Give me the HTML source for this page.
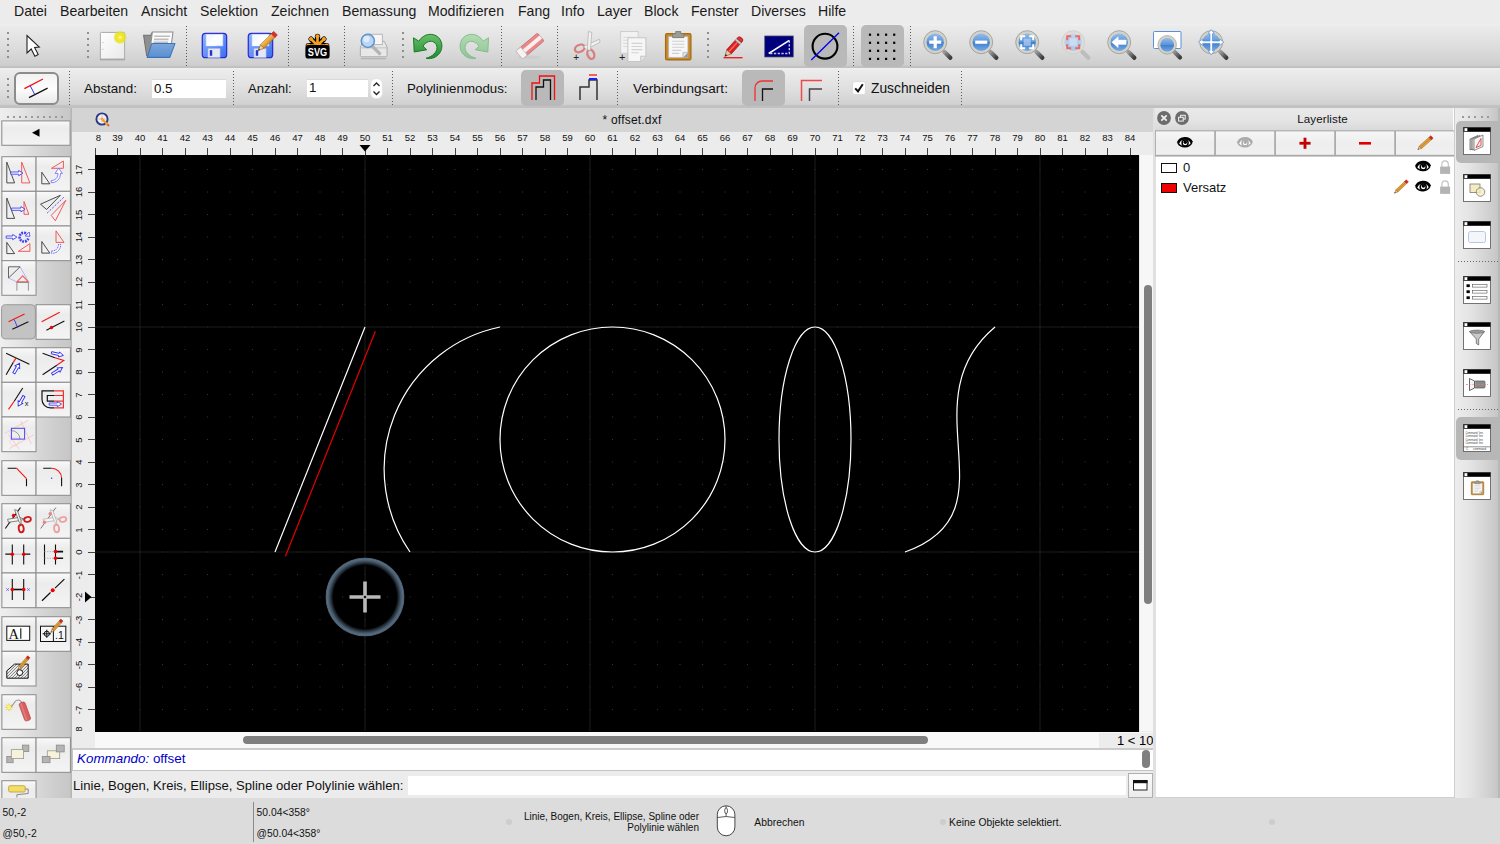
<!DOCTYPE html><html lang="de"><head><meta charset="utf-8"><title>offset.dxf</title><style>
*{box-sizing:border-box;margin:0;padding:0}
html,body{width:1500px;height:844px;overflow:hidden;background:#ececec;font-family:"Liberation Sans",sans-serif;color:#000}
.a{position:absolute}
#menubar{left:0;top:0;width:1500px;height:24px;background:#ececec}
#menubar span{position:absolute;top:3px;font-size:14.1px;line-height:17px;color:#1a1a1a;white-space:nowrap}
#tb1{left:0;top:24px;width:1500px;height:44px;background:linear-gradient(#f0f0f0 0%,#ebebeb 4%,#dedede 50%,#cecece 94%,#bababa 98%,#c8c8c8 100%)}
#tb2{left:0;top:68px;width:1500px;height:40px;background:linear-gradient(#f0f0f0 0%,#ececec 5%,#e0e0e0 50%,#d1d1d1 91%,#c2c2c2 94%,#c0c0c0 100%)}
.lbl{position:absolute;font-size:13px;line-height:16px;white-space:nowrap;color:#111}
.vsep{position:absolute;width:0;border-left:1px dotted #6e6e6e}
.hdl{position:absolute;width:2px;border-left:2px dotted #9a9a9a}
#left{left:0;top:108px;width:72px;height:690px;background:linear-gradient(90deg,#efefef 0%,#e6e6e6 25%,#d9d9d9 50%,#cecece 75%,#c7c7c7 97%,#b6b6b6 98.5%,#b6b6b6 100%)}
.lb{position:absolute;width:34.5px;height:34.8px;border:1px solid #a9a9a9;background:linear-gradient(#fbfbfb,#ededed 60%,#e2e2e2)}
.lb.on{background:#c9c9c9;border-color:#999;border-radius:4px}
.lb svg{position:absolute;left:0;top:0}
#status{left:0;top:798px;width:1500px;height:46px;background:#dcdcdc}
.st{position:absolute;font-size:10.3px;line-height:13px;color:#111;white-space:nowrap;letter-spacing:0.04px}
#tabbar{left:72px;top:108px;width:1083px;height:24px;background:#d4d4d4}
#hr{left:72px;top:132px;width:1083px;height:23px;background:#ececec}
#vr{left:72px;top:155px;width:23px;height:576px;background:#ececec;overflow:hidden}
.rl{position:absolute;font-size:9.5px;line-height:10px;color:#111;white-space:nowrap}
#cv{left:95px;top:155px;width:1044px;height:576.700px;background:#000;overflow:hidden}
#vsb{left:1139px;top:155px;width:16px;height:576px;background:#f7f7f7;border-left:1px solid #e4e4e4}
#hsb{left:95px;top:731.700px;width:1060px;height:16.300px;background:#f8f8f8}
#cmdhist{left:72px;top:748px;width:1083px;height:23px;background:#fff;border-top:2px solid #cbcbcb;border-bottom:1px solid #c4c4c4;border-left:1px solid #c4c4c4}
#cmdline{left:72px;top:771px;width:1083px;height:27px;background:#ececec}
#rp{left:1155px;top:108px;width:300px;height:690px;background:#fff}
#rdock{left:1455px;top:108px;width:45px;height:690.500px;background:linear-gradient(90deg,#ededed 0%,#e5e5e5 30%,#d3d3d3 70%,#c6c6c6 95%,#b8b8b8 96.5%,#b8b8b8 100%)}
.lyb{position:absolute;top:131px;height:24px;width:58.6px;border:1px solid #b4b4b4;background:linear-gradient(#fafafa,#ececec)}
.di{position:absolute;left:1465px;width:27px;height:27px}
</style></head><body>
<svg width="0" height="0" style="position:absolute"><defs>
<linearGradient id="gBlue" x1="0" y1="0" x2="0" y2="1"><stop offset="0" stop-color="#9cc2ee"/><stop offset="0.5" stop-color="#5b94d8"/><stop offset="0.52" stop-color="#3f7fce"/><stop offset="1" stop-color="#7fb0e8"/></linearGradient>
<linearGradient id="gBlueF" x1="0" y1="0" x2="0" y2="1"><stop offset="0" stop-color="#c4d8f0"/><stop offset="1" stop-color="#a9c6ea"/></linearGradient>
<linearGradient id="gHandle" x1="0" y1="0" x2="1" y2="1"><stop offset="0" stop-color="#9a9a9a"/><stop offset="1" stop-color="#3c3c3c"/></linearGradient>
<linearGradient id="gPaper" x1="0" y1="0" x2="1" y2="1"><stop offset="0" stop-color="#ffffff"/><stop offset="1" stop-color="#e9e9e9"/></linearGradient>
<radialGradient id="gGlow"><stop offset="0" stop-color="#ffffe0"/><stop offset="0.3" stop-color="#f4ea20"/><stop offset="0.7" stop-color="#e8e020" stop-opacity="0.9"/><stop offset="1" stop-color="#e8e020" stop-opacity="0"/></radialGradient>
<linearGradient id="gFolder" x1="0" y1="0" x2="0" y2="1"><stop offset="0" stop-color="#7aa8dc"/><stop offset="1" stop-color="#5a8fd0"/></linearGradient>
<linearGradient id="gFloppy" x1="0" y1="0" x2="1" y2="1"><stop offset="0" stop-color="#8fb6ff"/><stop offset="1" stop-color="#3a6ef0"/></linearGradient>
<linearGradient id="gGreen" x1="0" y1="0" x2="0" y2="1"><stop offset="0" stop-color="#6cc06c"/><stop offset="1" stop-color="#1e8a2e"/></linearGradient>
<linearGradient id="gGreenF" x1="0" y1="0" x2="0" y2="1"><stop offset="0" stop-color="#b4dcb4"/><stop offset="1" stop-color="#8cc494"/></linearGradient>
<linearGradient id="gPencil" x1="0" y1="0" x2="1" y2="0"><stop offset="0" stop-color="#f5c46a"/><stop offset="1" stop-color="#d98a1c"/></linearGradient>
<linearGradient id="gBtn" x1="0" y1="0" x2="0" y2="1"><stop offset="0" stop-color="#ffffff"/><stop offset="1" stop-color="#e9e9e9"/></linearGradient>
</defs></svg>

<div id="menubar" class="a">
<span style="left:14px">Datei</span>
<span style="left:60px">Bearbeiten</span>
<span style="left:141px">Ansicht</span>
<span style="left:200px">Selektion</span>
<span style="left:271px">Zeichnen</span>
<span style="left:342px">Bemassung</span>
<span style="left:428px">Modifizieren</span>
<span style="left:518px">Fang</span>
<span style="left:561px">Info</span>
<span style="left:597px">Layer</span>
<span style="left:644px">Block</span>
<span style="left:691px">Fenster</span>
<span style="left:751px">Diverses</span>
<span style="left:818px">Hilfe</span>
</div>
<div id="tb1" class="a">
<i class="a" style="left:7px;top:8px;width:2px;height:2px;background:#8e8e8e"></i><i class="a" style="left:7px;top:14px;width:2px;height:2px;background:#8e8e8e"></i><i class="a" style="left:7px;top:20px;width:2px;height:2px;background:#8e8e8e"></i><i class="a" style="left:7px;top:26px;width:2px;height:2px;background:#8e8e8e"></i><i class="a" style="left:7px;top:32px;width:2px;height:2px;background:#8e8e8e"></i><i class="a" style="left:87px;top:8px;width:2px;height:2px;background:#8e8e8e"></i><i class="a" style="left:87px;top:14px;width:2px;height:2px;background:#8e8e8e"></i><i class="a" style="left:87px;top:20px;width:2px;height:2px;background:#8e8e8e"></i><i class="a" style="left:87px;top:26px;width:2px;height:2px;background:#8e8e8e"></i><i class="a" style="left:87px;top:32px;width:2px;height:2px;background:#8e8e8e"></i><i class="a" style="left:402px;top:8px;width:2px;height:2px;background:#8e8e8e"></i><i class="a" style="left:402px;top:14px;width:2px;height:2px;background:#8e8e8e"></i><i class="a" style="left:402px;top:20px;width:2px;height:2px;background:#8e8e8e"></i><i class="a" style="left:402px;top:26px;width:2px;height:2px;background:#8e8e8e"></i><i class="a" style="left:402px;top:32px;width:2px;height:2px;background:#8e8e8e"></i><i class="a" style="left:707px;top:8px;width:2px;height:2px;background:#8e8e8e"></i><i class="a" style="left:707px;top:14px;width:2px;height:2px;background:#8e8e8e"></i><i class="a" style="left:707px;top:20px;width:2px;height:2px;background:#8e8e8e"></i><i class="a" style="left:707px;top:26px;width:2px;height:2px;background:#8e8e8e"></i><i class="a" style="left:707px;top:32px;width:2px;height:2px;background:#8e8e8e"></i><i class="a" style="left:186.0px;top:2.0px;height:40.0px;width:1px;background:repeating-linear-gradient(#5a5a5a 0 1px,transparent 1px 3px)"></i><i class="a" style="left:288.0px;top:2.0px;height:40.0px;width:1px;background:repeating-linear-gradient(#5a5a5a 0 1px,transparent 1px 3px)"></i><i class="a" style="left:344.0px;top:2.0px;height:40.0px;width:1px;background:repeating-linear-gradient(#5a5a5a 0 1px,transparent 1px 3px)"></i><i class="a" style="left:501.0px;top:2.0px;height:40.0px;width:1px;background:repeating-linear-gradient(#5a5a5a 0 1px,transparent 1px 3px)"></i><i class="a" style="left:557.0px;top:2.0px;height:40.0px;width:1px;background:repeating-linear-gradient(#5a5a5a 0 1px,transparent 1px 3px)"></i><i class="a" style="left:853.0px;top:2.0px;height:40.0px;width:1px;background:repeating-linear-gradient(#5a5a5a 0 1px,transparent 1px 3px)"></i><i class="a" style="left:910.0px;top:2.0px;height:40.0px;width:1px;background:repeating-linear-gradient(#5a5a5a 0 1px,transparent 1px 3px)"></i><i class="a" style="left:804px;top:1px;width:43px;height:42px;border-radius:5px;background:#b9b9b9"></i><i class="a" style="left:861px;top:1px;width:43px;height:42px;border-radius:5px;background:#b9b9b9"></i><svg class="a" style="left:97.0px;top:6.0px;overflow:visible" width="31" height="31" viewBox="0 0 32 32"><path d="M3 30.5 h26" stroke="#9a9a9a" stroke-width="1.6" opacity=".8"/><rect x="3.5" y="2.5" width="25" height="27.5" rx="1" fill="url(#gPaper)" stroke="#a8a8a8" stroke-width="1"/><path d="M5.5 13 h1.2 M5.5 20 h1.2" stroke="#bbb" stroke-width="1"/><circle cx="23.8" cy="7.6" r="7.2" fill="url(#gGlow)"/></svg><svg class="a" style="left:140.5px;top:5.0px;overflow:visible" width="33" height="33" viewBox="0 0 32 32"><path d="M2.5 6 h7 l1 -2 h4 v22 h-9 z" fill="#8f8f8f" stroke="#707070" stroke-width="1"/><path d="M8 26 L11 3 L31 3 L28 26Z" fill="#fafafa" stroke="#8e8e8e" stroke-width="1"/><path d="M13 7 h15 M12.6 10 h14 M12.2 13 h14" stroke="#bdbdbd" stroke-width="1.6"/><path d="M6 27.5 L10.5 14 L33 14 L28 27.5Z" fill="url(#gFolder)" stroke="#3f73b8" stroke-width="1" stroke-linejoin="round"/></svg><svg class="a" style="left:198.9px;top:5.7px;overflow:visible" width="30" height="30" viewBox="0 0 32 32"><rect x="3.5" y="3.5" width="26" height="26" rx="3.5" fill="url(#gFloppy)" stroke="#2a2ad0" stroke-width="1.3"/><rect x="7.5" y="4.5" width="18" height="12.5" fill="#f4f8ff" stroke="#c4d4f4" stroke-width=".6"/><path d="M8 15 L18 5 h7 v5 l-7 7 h-10z" fill="#fff" opacity=".7"/><rect x="9.5" y="19.5" width="13" height="10" fill="#e4e8f4" stroke="#9aa8d8" stroke-width=".6"/><rect x="11.5" y="21.5" width="2.6" height="6" fill="#2233cc"/></svg><svg class="a" style="left:244.9px;top:5.7px;overflow:visible" width="30" height="30" viewBox="0 0 32 32"><rect x="3.5" y="3.5" width="26" height="26" rx="3.5" fill="url(#gFloppy)" stroke="#2a2ad0" stroke-width="1.3"/><rect x="7.5" y="4.5" width="18" height="12.5" fill="#f4f8ff" stroke="#c4d4f4" stroke-width=".6"/><path d="M8 15 L18 5 h7 v5 l-7 7 h-10z" fill="#fff" opacity=".7"/><rect x="9.5" y="19.5" width="13" height="10" fill="#e4e8f4" stroke="#9aa8d8" stroke-width=".6"/><rect x="11.5" y="21.5" width="2.6" height="6" fill="#2233cc"/><g transform="translate(14 22) scale(1.05) rotate(45)"><path d="M0 0 L-2.6 -6 L2.6 -6Z" fill="#f0d0a0" stroke="#8a5a1a" stroke-width=".6"/><path d="M0 0 L-0.9 -2 L0.9 -2Z" fill="#333"/><rect x="-2.6" y="-22" width="5.2" height="16" fill="url(#gPencil)" stroke="#a8660f" stroke-width=".6"/><rect x="-2.6" y="-25" width="5.2" height="3.4" fill="#e03030" stroke="#a01818" stroke-width=".6"/></g></svg><svg class="a" style="left:301.5px;top:6.6px;overflow:visible" width="31" height="31" viewBox="0 0 32 32"><g fill="#f4a020" stroke="#000" stroke-width="1.6"><path d="M16 15 L6.5 15.0" stroke="#000" stroke-width="5.4" stroke-linecap="round"/><path d="M16 15 L9.3 8.3" stroke="#000" stroke-width="5.4" stroke-linecap="round"/><path d="M16 15 L16.0 5.5" stroke="#000" stroke-width="5.4" stroke-linecap="round"/><path d="M16 15 L22.7 8.3" stroke="#000" stroke-width="5.4" stroke-linecap="round"/><path d="M16 15 L25.5 15.0" stroke="#000" stroke-width="5.4" stroke-linecap="round"/></g><g><path d="M16 15 L6.5 15.0" stroke="#f4a020" stroke-width="2.8" stroke-linecap="round"/><circle cx="6.5" cy="15.0" r="2.1" fill="#f4a020"/><path d="M16 15 L9.3 8.3" stroke="#f4a020" stroke-width="2.8" stroke-linecap="round"/><circle cx="9.3" cy="8.3" r="2.1" fill="#f4a020"/><path d="M16 15 L16.0 5.5" stroke="#f4a020" stroke-width="2.8" stroke-linecap="round"/><circle cx="16.0" cy="5.5" r="2.1" fill="#f4a020"/><path d="M16 15 L22.7 8.3" stroke="#f4a020" stroke-width="2.8" stroke-linecap="round"/><circle cx="22.7" cy="8.3" r="2.1" fill="#f4a020"/><path d="M16 15 L25.5 15.0" stroke="#f4a020" stroke-width="2.8" stroke-linecap="round"/><circle cx="25.5" cy="15.0" r="2.1" fill="#f4a020"/></g><rect x="3.5" y="14.5" width="25" height="14" rx="3" fill="#000"/><text x="16" y="26.3" text-anchor="middle" font-family="Liberation Sans, sans-serif" font-weight="bold" font-size="11.5" textLength="20" lengthAdjust="spacingAndGlyphs" fill="#fff">SVG</text></svg><svg class="a" style="left:358.0px;top:6.5px;overflow:visible" width="30" height="30" viewBox="0 0 32 32"><path d="M2.5 17 L6 11 h22 l3 6 v9 a1.5 1.5 0 0 1 -1.5 1.5 h-25.5 a1.5 1.5 0 0 1 -1.5 -1.5z" fill="#e8e8e8" stroke="#a9a9a9" stroke-width="1"/><rect x="11" y="3.5" width="15" height="11" fill="#f6f6f6" stroke="#b4b4b4" stroke-width="1"/><path d="M2.5 18 h28.5" stroke="#bdbdbd" stroke-width="1"/><path d="M3 29.5 h27" stroke="#aaa" stroke-width="1.4" opacity=".7"/><path d="M15 16 L23 24" stroke="#b4b4b4" stroke-width="3.4" stroke-linecap="round"/><circle cx="10.5" cy="10.5" r="7" fill="#bcd6f2" stroke="#5c92d0" stroke-width="1.6"/><circle cx="9" cy="8.6" r="3.4" fill="#e6f0fb" opacity=".8"/></svg><svg class="a" style="left:412.0px;top:5.5px;overflow:visible" width="32" height="32" viewBox="0 0 32 32"><path d="M1.5 7.8 L2.2 22 L14.7 19.8 L11 16.2 C14 11.5 19 10.2 22 12.2 C26 14.8 26 20 22 24 C20 26 17 27.5 14 28.3 C18 29.2 23 28.2 26.5 24.5 C31 20 31 12 26.5 7.5 C21 2.5 12 3.2 6.8 11.2 Z" fill="url(#gGreen)" stroke="#1a7a28" stroke-width="1" stroke-linejoin="round"/></svg><svg class="a" style="left:458.0px;top:5.5px;overflow:visible" width="32" height="32" viewBox="0 0 32 32"><g transform="translate(32 0) scale(-1 1)"><path d="M1.5 7.8 L2.2 22 L14.7 19.8 L11 16.2 C14 11.5 19 10.2 22 12.2 C26 14.8 26 20 22 24 C20 26 17 27.5 14 28.3 C18 29.2 23 28.2 26.5 24.5 C31 20 31 12 26.5 7.5 C21 2.5 12 3.2 6.8 11.2 Z" fill="url(#gGreenF)" stroke="#86bc8e" stroke-width="1" stroke-linejoin="round"/></g></svg><svg class="a" style="left:515.0px;top:6.5px;overflow:visible" width="30" height="30" viewBox="0 0 32 32"><ellipse cx="15" cy="28" rx="12" ry="1.8" fill="#c9c9c9" opacity=".7"/><g transform="rotate(-40 16 16)"><rect x="1" y="10.5" width="30" height="11" rx="1.5" fill="#e88888" stroke="#c06a6a" stroke-width=".8"/><rect x="1" y="14" width="30" height="4.2" fill="#fbeeee"/><rect x="1" y="10.5" width="6.5" height="11" rx="1.2" fill="#f4f4f4" stroke="#c4c4c4" stroke-width=".8"/></g></svg><svg class="a" style="left:570.0px;top:6.0px;overflow:visible" width="31" height="31" viewBox="0 0 32 32"><g fill="none" stroke="#d88080" stroke-width="2.4"><ellipse cx="10" cy="19" rx="5.2" ry="3.6" transform="rotate(-25 10 19)"/><ellipse cx="21.5" cy="25" rx="3.4" ry="5" transform="rotate(-20 21.5 25)"/></g><path d="M14 17 L30.5 9.5 L31 12.5 L17 20Z" fill="#f1f1f1" stroke="#b4b4b4" stroke-width=".8"/><path d="M18 20.5 L19 1.5 L22.5 2.5 L21 21Z" fill="#f1f1f1" stroke="#b4b4b4" stroke-width=".8"/><text x="3.300" y="31.800" font-family="Liberation Sans, sans-serif" font-size="10.500" fill="#222">+</text></svg><svg class="a" style="left:615.5px;top:5.0px;overflow:visible" width="33" height="33" viewBox="0 0 32 32"><path d="M4.500 2.500 h17 v21 h-17z" fill="#f2f2f2" stroke="#cfcfcf" stroke-width="1"/><path d="M7 8 h11 M7 11 h11 M7 14 h11 M7 17 h11" stroke="#dadada" stroke-width="1"/><path d="M11.500 8.500 h17.5 v18 l-5 5 h-12.500z" fill="#f6f6f6" stroke="#c6c6c6" stroke-width="1"/><path d="M29 26.500 h-5 v5" fill="#e4e4e4" stroke="#c6c6c6" stroke-width="1"/><path d="M15 14 h10.500 M15 17 h10.500 M15 20 h10.500 M15 23 h7" stroke="#d2d2d2" stroke-width="1.1"/><text x="2.800" y="31.300" font-family="Liberation Sans, sans-serif" font-size="10.500" fill="#222">+</text></svg><svg class="a" style="left:661.8px;top:5.2px;overflow:visible" width="32.5" height="32.5" viewBox="0 0 32 32"><rect x="3.500" y="4.500" width="25" height="26" rx="1.5" fill="#c88a2c" stroke="#a06a18" stroke-width="1.2"/><path d="M6.500 7.500 h19 v20.500 h-19z" fill="#f7f7f7" stroke="#b9b9b9" stroke-width=".7"/><path d="M20.500 28 L25.500 23 v5z" fill="#9a9a9a"/><path d="M20.500 28 v-5 h5" fill="#e2e2e2" stroke="#aaa" stroke-width=".6"/><path d="M10 12 h12 M10 15 h12 M10 18 h12 M10 21 h9 M10 24 h7" stroke="#cfcfcf" stroke-width="1.1"/><path d="M10.500 8.500 v-3 a1 1 0 0 1 1 -1 h2 v-2 h5 v2 h2 a1 1 0 0 1 1 1 v3z" fill="#9c9c92" stroke="#77776e" stroke-width=".8"/></svg><svg class="a" style="left:718.5px;top:7.0px;overflow:visible" width="29" height="29" viewBox="0 0 32 32"><path d="M5 29.500 h21" stroke="#f00000" stroke-width="1.300"/><g transform="translate(6.500 28) rotate(42)"><path d="M0 0 L-3.400 -7 L3.400 -7Z" fill="#eac9a0" stroke="#7a4a10" stroke-width=".6"/><path d="M0 0 L-1.200 -2.500 L1.200 -2.500Z" fill="#222"/><rect x="-3.400" y="-21" width="6.800" height="14" fill="#e02020" stroke="#8c1010" stroke-width=".7"/><rect x="-1" y="-21" width="1.600" height="14" fill="#f46a6a"/><rect x="-3.400" y="-23.500" width="6.800" height="2.600" fill="#cfcfcf" stroke="#888" stroke-width=".6"/><path d="M-3.400 -23.500 v-1.500 a3.400 2.500 0 0 1 6.800 0 v1.500z" fill="#e03030" stroke="#8c1010" stroke-width=".7"/></g></svg><svg class="a" style="left:764.0px;top:6.5px;overflow:visible" width="30" height="30" viewBox="0 0 32 32"><rect x="1" y="5.500" width="30" height="22" fill="#00007e" stroke="#1a1a5a" stroke-width="1"/><path d="M5 24 L27 10" stroke="#fff" stroke-width="1.600"/><path d="M27 10 V24 H5" stroke="#c8c8e8" stroke-width="1.500" stroke-dasharray="2.400 1.600" fill="none"/></svg><svg class="a" style="left:809.0px;top:5.5px;overflow:visible" width="32" height="32" viewBox="0 0 32 32"><circle cx="16" cy="16.200" r="12.400" fill="none" stroke="#000" stroke-width="2.100"/><path d="M2.300 30 L30 2.800" stroke="#0000f0" stroke-width="1.300"/></svg><svg class="a" style="left:866.0px;top:5.5px;overflow:visible" width="32" height="32" viewBox="0 0 32 32"><rect x="2.9" y="3.6" width="2.200" height="2.200" fill="#000"/><rect x="2.9" y="11.7" width="2.200" height="2.200" fill="#000"/><rect x="2.9" y="19.7" width="2.200" height="2.200" fill="#000"/><rect x="2.9" y="27.8" width="2.200" height="2.200" fill="#000"/><rect x="11.0" y="3.6" width="2.200" height="2.200" fill="#000"/><rect x="11.0" y="11.7" width="2.200" height="2.200" fill="#000"/><rect x="11.0" y="19.7" width="2.200" height="2.200" fill="#000"/><rect x="11.0" y="27.8" width="2.200" height="2.200" fill="#000"/><rect x="19.0" y="3.6" width="2.200" height="2.200" fill="#000"/><rect x="19.0" y="11.7" width="2.200" height="2.200" fill="#000"/><rect x="19.0" y="19.7" width="2.200" height="2.200" fill="#000"/><rect x="19.0" y="27.8" width="2.200" height="2.200" fill="#000"/><rect x="27.1" y="3.6" width="2.200" height="2.200" fill="#000"/><rect x="27.1" y="11.7" width="2.200" height="2.200" fill="#000"/><rect x="27.1" y="19.7" width="2.200" height="2.200" fill="#000"/><rect x="27.1" y="27.8" width="2.200" height="2.200" fill="#000"/></svg><svg class="a" style="left:922.0px;top:5.5px;overflow:visible" width="32" height="32" viewBox="0 0 32 32"><path d="M22.5 22 L28.3 27.8" stroke="url(#gHandle)" stroke-width="4.4" stroke-linecap="round"/><g transform="translate(0.2 -0.8)"><circle cx="13" cy="13" r="10" fill="url(#gBlue)" stroke="#d2d2c8" stroke-width="2.6"/><circle cx="13" cy="13" r="11.5" fill="none" stroke="#8c8c84" stroke-width="0.7"/><path d="M7 13 h12 M13 7 v12" stroke="#fff" stroke-width="3.200"/></g></svg><svg class="a" style="left:968.0px;top:5.5px;overflow:visible" width="32" height="32" viewBox="0 0 32 32"><path d="M22.5 22 L28.3 27.8" stroke="url(#gHandle)" stroke-width="4.4" stroke-linecap="round"/><g transform="translate(0.2 -0.8)"><circle cx="13" cy="13" r="10" fill="url(#gBlue)" stroke="#d2d2c8" stroke-width="2.6"/><circle cx="13" cy="13" r="11.5" fill="none" stroke="#8c8c84" stroke-width="0.7"/><path d="M7 13 h12" stroke="#fff" stroke-width="3.200"/></g></svg><svg class="a" style="left:1014.0px;top:5.5px;overflow:visible" width="32" height="32" viewBox="0 0 32 32"><path d="M22.5 22 L28.3 27.8" stroke="url(#gHandle)" stroke-width="4.4" stroke-linecap="round"/><g transform="translate(0.2 -0.8)"><circle cx="13" cy="13" r="10" fill="url(#gBlue)" stroke="#d2d2c8" stroke-width="2.6"/><circle cx="13" cy="13" r="11.5" fill="none" stroke="#8c8c84" stroke-width="0.7"/><rect x="9.500" y="9.500" width="7" height="7" fill="#b9d2f0" opacity=".7"/><path d="M7 11 v-4 h4 M15 7 h4 v4 M19 15 v4 h-4 M11 19 h-4 v-4" fill="none" stroke="#fff" stroke-width="2"/></g></svg><svg class="a" style="left:1060.0px;top:5.5px;overflow:visible" width="32" height="32" viewBox="0 0 32 32"><path d="M22.5 22 L28.3 27.8" stroke="#bdbdbd" stroke-width="4.4" stroke-linecap="round"/><g transform="translate(0.2 -0.8)"><circle cx="13" cy="13" r="10" fill="url(#gBlueF)" stroke="#deded9" stroke-width="2.6"/><circle cx="13" cy="13" r="11.5" fill="none" stroke="#c8c8c4" stroke-width="0.7"/><rect x="9.500" y="9.500" width="7" height="7" fill="#d4e2f4" opacity=".7"/><path d="M7 11 v-4 h4 M15 7 h4 v4 M19 15 v4 h-4 M11 19 h-4 v-4" fill="none" stroke="#e86a6a" stroke-width="2"/></g></svg><svg class="a" style="left:1106.0px;top:5.5px;overflow:visible" width="32" height="32" viewBox="0 0 32 32"><path d="M22.5 22 L28.3 27.8" stroke="url(#gHandle)" stroke-width="4.4" stroke-linecap="round"/><g transform="translate(0.2 -0.8)"><circle cx="13" cy="13" r="10" fill="url(#gBlue)" stroke="#d2d2c8" stroke-width="2.6"/><circle cx="13" cy="13" r="11.5" fill="none" stroke="#8c8c84" stroke-width="0.7"/><path d="M5.500 13 L12 7.500 V10.800 H20 V15.200 H12 V18.500Z" fill="#fff" stroke="#e8eef8" stroke-width=".5"/></g></svg><svg class="a" style="left:1152.0px;top:5.5px;overflow:visible" width="32" height="32" viewBox="0 0 32 32"><rect x="1.5" y="1.5" width="27.5" height="17" rx="1" fill="#fff" stroke="#5b8fd6" stroke-width="1"/><path d="M22 21.5 L28 27.5" stroke="url(#gHandle)" stroke-width="4.2" stroke-linecap="round"/><circle cx="15.2" cy="14.8" r="8" fill="url(#gBlue)" stroke="#d2d2c8" stroke-width="2.2"/><circle cx="15.2" cy="14.8" r="9.3" fill="none" stroke="#8c8c84" stroke-width="0.6"/></svg><svg class="a" style="left:1198.0px;top:5.5px;overflow:visible" width="32" height="32" viewBox="0 0 32 32"><path d="M22.5 22 L28.3 27.8" stroke="url(#gHandle)" stroke-width="4.4" stroke-linecap="round"/><g transform="translate(0.2 -0.8)"><circle cx="13" cy="13" r="10" fill="url(#gBlue)" stroke="#d2d2c8" stroke-width="2.6"/><circle cx="13" cy="13" r="11.5" fill="none" stroke="#8c8c84" stroke-width="0.7"/><g fill="#fff" stroke="#4a86d8" stroke-width=".7" transform="translate(13 13) scale(.94) translate(-13 -13)"><path d="M13 -0.500 L16.400 4 H14.300 V11.700 H22 V9.600 L26.500 13 L22 16.400 V14.300 H14.300 V22 H16.400 L13 26.500 L9.600 22 H11.700 V14.300 H4 V16.400 L-0.500 13 L4 9.600 V11.700 H11.700 V4 H9.600Z"/></g></g></svg><svg class="a" style="left:20px;top:5px" width="26" height="34" viewBox="20 29 26 34"><path d="M27 35.500 L27 52.900 L31.200 49 L34.900 56.300 L38.200 54.600 L34.600 47.500 L39.300 47 Z" fill="#fff" stroke="#222" stroke-width="1.100" stroke-linejoin="miter"/></svg>
</div>
<div id="tb2" class="a">
<i class="a" style="left:7px;top:10px;width:2px;height:2px;background:#8e8e8e"></i><i class="a" style="left:7px;top:16px;width:2px;height:2px;background:#8e8e8e"></i><i class="a" style="left:7px;top:22px;width:2px;height:2px;background:#8e8e8e"></i><i class="a" style="left:7px;top:28px;width:2px;height:2px;background:#8e8e8e"></i><i class="a" style="left:68.5px;top:3.0px;height:34.0px;width:1px;background:repeating-linear-gradient(#5a5a5a 0 1px,transparent 1px 3px)"></i><i class="a" style="left:232.5px;top:3.0px;height:34.0px;width:1px;background:repeating-linear-gradient(#5a5a5a 0 1px,transparent 1px 3px)"></i><i class="a" style="left:391.5px;top:3.0px;height:34.0px;width:1px;background:repeating-linear-gradient(#5a5a5a 0 1px,transparent 1px 3px)"></i><i class="a" style="left:616.5px;top:3.0px;height:34.0px;width:1px;background:repeating-linear-gradient(#5a5a5a 0 1px,transparent 1px 3px)"></i><i class="a" style="left:837.5px;top:3.0px;height:34.0px;width:1px;background:repeating-linear-gradient(#5a5a5a 0 1px,transparent 1px 3px)"></i><i class="a" style="left:960.5px;top:3.0px;height:34.0px;width:1px;background:repeating-linear-gradient(#5a5a5a 0 1px,transparent 1px 3px)"></i><i class="a" style="left:14px;top:4px;width:45px;height:33px;border:2px solid #8c8c8c;border-radius:6px;background:linear-gradient(#f2f2f2,#fdfdfd 50%,#e9e9e9)"></i><svg class="a" style="left:0;top:0" width="70" height="40"><path d="M24.4 20.700 L43 11" stroke="#f01010" stroke-width="1.300"/><path d="M29 29.600 L47.600 20.200" stroke="#111" stroke-width="1.300"/><path d="M30.300 17.900 L34.800 26.600" stroke="#3030f0" stroke-width="1"/></svg><span class="lbl" style="left:84px;top:13px;font-size:13.4px">Abstand:</span><i class="a" style="left:152px;top:10.500px;width:73.500px;height:19.500px;background:#fff;border-top:1px solid #d9d9d9"></i><span class="lbl" style="left:154px;top:12.500px;font-size:13.3px">0.5</span><span class="lbl" style="left:248px;top:13px;font-size:13.1px">Anzahl:</span><i class="a" style="left:307px;top:11px;width:61px;height:18px;background:#fff;border-top:1px solid #d9d9d9"></i><span class="lbl" style="left:309px;top:12px;font-size:13.3px">1</span><i class="a" style="left:370px;top:9.500px;width:13px;height:21px;background:#fff;border-radius:6px;border:1px solid #e4e4e4"></i><svg class="a" style="left:370px;top:9.500px" width="13" height="21"><path d="M3.500 8 L6.500 5 L9.500 8 M3.500 13.500 L6.500 16.500 L9.500 13.500" fill="none" stroke="#222" stroke-width="1.300"/></svg><span class="lbl" style="left:407px;top:13px;font-size:13.3px">Polylinienmodus:</span><i class="a" style="left:521px;top:2px;width:43px;height:36px;border-radius:5px;background:#b9b9b9"></i><svg class="a" style="left:527.5px;top:5.0px;overflow:visible" width="30" height="30" viewBox="0 0 30 30"><path d="M4 27 V10 H11.500 V3 H26.500 V27" fill="none" stroke="#f01010" stroke-width="1.300"/><path d="M8 27 V14 H15.500 V7 H22.500 V27" fill="none" stroke="#111" stroke-width="1.300"/></svg><svg class="a" style="left:575.3px;top:5.0px;overflow:visible" width="30" height="30" viewBox="0 0 30 30"><path d="M5 27 V14 H14 V7 H22 V27" fill="none" stroke="#333" stroke-width="1.500"/><path d="M14 6 H22" stroke="#2020f0" stroke-width="2"/><path d="M14 2 H22" stroke="#f06060" stroke-width="2"/></svg><span class="lbl" style="left:633px;top:13px;font-size:13.55px">Verbindungsart:</span><i class="a" style="left:742px;top:2px;width:43px;height:36px;border-radius:5px;background:#b9b9b9"></i><svg class="a" style="left:749.0px;top:5.5px;overflow:visible" width="30" height="30" viewBox="0 0 30 30"><path d="M6 27 V14 A7 7 0 0 1 13 7 H24" fill="none" stroke="#f03030" stroke-width="1.300"/><path d="M13.500 27 V15 H24" fill="none" stroke="#111" stroke-width="1.300"/></svg><svg class="a" style="left:797.0px;top:5.5px;overflow:visible" width="30" height="30" viewBox="0 0 30 30"><path d="M4.500 27 V6.500 H25" fill="none" stroke="#f04848" stroke-width="1.500"/><path d="M12.500 27 V15 H25" fill="none" stroke="#444" stroke-width="1.500"/></svg><i class="a" style="left:852px;top:13px;width:14px;height:14px;background:#fff;border-radius:3px;border:1px solid #dcdcdc"></i><svg class="a" style="left:852px;top:13px" width="14" height="14"><path d="M3.200 7.400 L6 10.400 L10.800 3.200" fill="none" stroke="#111" stroke-width="2"/></svg><span class="lbl" style="left:871px;top:12.500px;font-size:13.8px">Zuschneiden</span>
</div>
<div id="left" class="a">
<i class="a" style="left:7px;top:8px;width:2px;height:2px;background:#9a9a9a"></i><i class="a" style="left:13px;top:8px;width:2px;height:2px;background:#9a9a9a"></i><i class="a" style="left:19px;top:8px;width:2px;height:2px;background:#9a9a9a"></i><i class="a" style="left:25px;top:8px;width:2px;height:2px;background:#9a9a9a"></i><i class="a" style="left:31px;top:8px;width:2px;height:2px;background:#9a9a9a"></i><i class="a" style="left:37px;top:8px;width:2px;height:2px;background:#9a9a9a"></i><i class="a" style="left:43px;top:8px;width:2px;height:2px;background:#9a9a9a"></i><i class="a" style="left:49px;top:8px;width:2px;height:2px;background:#9a9a9a"></i><i class="a" style="left:55px;top:8px;width:2px;height:2px;background:#9a9a9a"></i><i class="a" style="left:61px;top:8px;width:2px;height:2px;background:#9a9a9a"></i><svg class="a" style="left:0;top:0" width="72" height="690" viewBox="0 108 72 690"><defs><linearGradient id="gLB" x1="0" y1="0" x2="0" y2="1"><stop offset="0" stop-color="#fbfbfb"/><stop offset=".12" stop-color="#f3f3f3"/><stop offset=".3" stop-color="#ececec"/><stop offset="1" stop-color="#f4f4f4"/></linearGradient></defs><rect x="1.800" y="120.900" width="68.300" height="24.400" fill="url(#gLB)" stroke="#929292" stroke-width="1.100"/><path d="M39.500 128.800 V136.800 L32 132.800Z" fill="#000"/><rect x="1.85" y="156.70" width="34.20" height="34.65" fill="url(#gLB)" stroke="#929292" stroke-width="1.100"/><rect x="36.05" y="156.70" width="34.40" height="34.65" fill="url(#gLB)" stroke="#929292" stroke-width="1.100"/><rect x="1.85" y="191.35" width="34.20" height="34.65" fill="url(#gLB)" stroke="#929292" stroke-width="1.100"/><rect x="36.05" y="191.35" width="34.40" height="34.65" fill="url(#gLB)" stroke="#929292" stroke-width="1.100"/><rect x="1.85" y="226.00" width="34.20" height="34.65" fill="url(#gLB)" stroke="#929292" stroke-width="1.100"/><rect x="36.05" y="226.00" width="34.40" height="34.65" fill="url(#gLB)" stroke="#929292" stroke-width="1.100"/><rect x="1.85" y="260.65" width="34.20" height="34.65" fill="url(#gLB)" stroke="#929292" stroke-width="1.100"/><rect x="1.55" y="304.70" width="33.800" height="34.200" rx="4" fill="#c3c3c3" stroke="#9c9c9c" stroke-width="1"/><rect x="36.05" y="304.70" width="34.40" height="34.65" fill="url(#gLB)" stroke="#929292" stroke-width="1.100"/><rect x="1.85" y="347.70" width="34.20" height="34.65" fill="url(#gLB)" stroke="#929292" stroke-width="1.100"/><rect x="36.05" y="347.70" width="34.40" height="34.65" fill="url(#gLB)" stroke="#929292" stroke-width="1.100"/><rect x="1.85" y="382.35" width="34.20" height="34.65" fill="url(#gLB)" stroke="#929292" stroke-width="1.100"/><rect x="36.05" y="382.35" width="34.40" height="34.65" fill="url(#gLB)" stroke="#929292" stroke-width="1.100"/><rect x="1.85" y="417.00" width="34.20" height="34.65" fill="url(#gLB)" stroke="#929292" stroke-width="1.100"/><rect x="1.85" y="460.70" width="34.20" height="34.65" fill="url(#gLB)" stroke="#929292" stroke-width="1.100"/><rect x="36.05" y="460.70" width="34.40" height="34.65" fill="url(#gLB)" stroke="#929292" stroke-width="1.100"/><rect x="1.85" y="503.70" width="34.20" height="34.65" fill="url(#gLB)" stroke="#929292" stroke-width="1.100"/><rect x="36.05" y="503.70" width="34.40" height="34.65" fill="url(#gLB)" stroke="#929292" stroke-width="1.100"/><rect x="1.85" y="538.35" width="34.20" height="34.65" fill="url(#gLB)" stroke="#929292" stroke-width="1.100"/><rect x="36.05" y="538.35" width="34.40" height="34.65" fill="url(#gLB)" stroke="#929292" stroke-width="1.100"/><rect x="1.85" y="573.00" width="34.20" height="34.65" fill="url(#gLB)" stroke="#929292" stroke-width="1.100"/><rect x="36.05" y="573.00" width="34.40" height="34.65" fill="url(#gLB)" stroke="#929292" stroke-width="1.100"/><rect x="1.85" y="616.70" width="34.20" height="34.65" fill="url(#gLB)" stroke="#929292" stroke-width="1.100"/><rect x="36.05" y="616.70" width="34.40" height="34.65" fill="url(#gLB)" stroke="#929292" stroke-width="1.100"/><rect x="1.85" y="651.35" width="34.20" height="34.65" fill="url(#gLB)" stroke="#929292" stroke-width="1.100"/><rect x="1.85" y="694.70" width="34.20" height="34.65" fill="url(#gLB)" stroke="#929292" stroke-width="1.100"/><rect x="1.85" y="737.70" width="34.20" height="34.65" fill="url(#gLB)" stroke="#929292" stroke-width="1.100"/><rect x="36.05" y="737.70" width="34.40" height="34.65" fill="url(#gLB)" stroke="#929292" stroke-width="1.100"/><rect x="1.85" y="780.70" width="34.20" height="34.65" fill="url(#gLB)" stroke="#929292" stroke-width="1.100"/><g transform="translate(1.40 156.80)"><path d="M5.4 5.3 L5.4 26.1 L13.2 26.1 Z" stroke="#3a3a3a" stroke-width=".9" fill="none"/><path d="M20.3 5.3 L20.3 26.1 L28.5 26.1 Z" stroke="#f04848" stroke-width=".9" fill="none"/><path d="M9.3 15.2 H17.3 V13.7 L21.5 16.3 L17.3 18.9 V17.4 H9.3 Z" stroke="#4040f0" stroke-width=".9" fill="#fff"/></g><g transform="translate(36.80 156.80)"><path d="M5 15.4 L5 27 L13 27 Z" stroke="#3a3a3a" stroke-width=".9" fill="none"/><path d="M14.7 11.5 L26.6 4.2 L26.6 11.5 Z" stroke="#f04848" stroke-width=".9" fill="none"/><path d="M14.400 23.700 C18.500 23.700 21.200 21 21.200 16.600 H18.300 L21.900 11.300 L25.600 16.600 H23.700 C23.700 22.500 19.500 25.900 14.400 25.900 Z" stroke="#6464ff" stroke-width=".8" fill="#fff"/></g><g transform="translate(1.40 191.80)"><path d="M5.4 6.2 L5.4 26.6 L13.2 26.6 Z" stroke="#3a3a3a" stroke-width=".9" fill="none"/><path d="M22.6 9.7 L22.6 22.5 L27.4 22.5 Z" stroke="#f04848" stroke-width=".9" fill="none"/><path d="M10.2 16.3 H19.5 V14.8 L23.7 17.4 L19.5 20.0 V18.5 H10.2 Z" stroke="#4040f0" stroke-width=".9" fill="#fff"/></g><g transform="translate(36.80 191.80)"><path d="M3.7 12.4 L23.6 3.5 L9.8 17.7 Z" stroke="#3a3a3a" stroke-width=".9" fill="none"/><path d="M14.4 23.6 L29 8.5 L18.6 28.9 Z" stroke="#f04848" stroke-width=".9" fill="none"/><path d="M10.300 21.300 L27.200 5.300" stroke="#4040f0" stroke-width=".9" stroke-dasharray="2 1.500"/></g><g transform="translate(1.40 226.50)"><path d="M4.8 9.5 H11.3 V8.0 L15.5 10.6 L11.3 13.2 V11.7 H4.8 Z" stroke="#4040f0" stroke-width=".9" fill="#fff"/><path d="M26.500 8.600 A4.400 4.400 0 1 0 26.800 12" stroke="#4040f0" stroke-width="2.600" fill="none" stroke-dasharray="1.800 .9"/><path d="M23.800 9.500 L28.500 9.800 L27.800 5.500Z" fill="#fff" stroke="#4040f0" stroke-width=".8"/><path d="M5.4 15.9 L5.4 27.1 L13.2 27.1 Z" stroke="#3a3a3a" stroke-width=".9" fill="none"/><path d="M16.9 24.8 L28.5 17.2 L28.5 24.8 Z" stroke="#f04848" stroke-width=".9" fill="none"/></g><g transform="translate(36.80 226.50)"><path d="M5 15 L5 26.6 L13 26.6 Z" stroke="#3a3a3a" stroke-width=".9" fill="none"/><path d="M19.2 4.4 L19.2 15.9 L27.2 15.9 Z" stroke="#f04848" stroke-width=".9" fill="none"/><path d="M14.700 24.600 C19 24.600 21.500 22 21.700 18 L23.900 18 C23.900 23.500 20 26.800 14.700 26.800Z" stroke="#4040f0" stroke-width=".8" fill="#fff" stroke-dasharray="1.600 .8"/></g><g transform="translate(1.40 261.50)"><path d="M7.100 16.500 V5.300 H18.700 L7.100 16.500" stroke="#555" stroke-width=".9" fill="none"/><path d="M7.100 16.500 L15.500 20.400 M18.700 5.300 L27 20" stroke="#8c8cff" stroke-width=".6" fill="none"/><path d="M15.500 20.400 L21.300 14.300 L27 20.400Z" stroke="#f06060" stroke-width="1.100" fill="none"/><path d="M15.500 21 V29.200 M27 21 V29.200 M15.500 21 H27" stroke="#8a8a8a" stroke-width=".9" fill="none"/></g><g transform="translate(1.40 304.50)"><path d="M7.100 17.200 L23.200 9.600" stroke="#f01818" stroke-width="1.100"/><path d="M10.900 24.800 L27 17.200" stroke="#111" stroke-width="1.100"/><path d="M12.800 15 L16.200 23" stroke="#3838f0" stroke-width=".9"/></g><g transform="translate(36.80 304.50)"><path d="M4.900 17.200 L22.900 7.700" stroke="#f01818" stroke-width="1.100"/><path d="M9.600 25.700 L27.600 16.600" stroke="#111" stroke-width="1.100"/><circle cx="14.700" cy="23" r="1.700" fill="#f00000"/></g><g transform="translate(1.40 347.50)"><path d="M4.700 5.800 L28 16.800" stroke="#111" stroke-width="1.100"/><path d="M4.700 27.200 L11.900 14.900" stroke="#111" stroke-width="1.100"/><path d="M11.900 14.900 L14.700 10.400" stroke="#f01818" stroke-width="1.100"/><g transform="translate(12.4 25.8) rotate(-59.9)"><path d="M0 -1.2 H7.1 V-2.7 L11.6 0 L7.1 2.7 V1.2 H0 Z" stroke="#3030f0" stroke-width=".9" fill="#fff"/></g></g><g transform="translate(36.80 347.50)"><path d="M5.800 5.800 L18.100 10.200" stroke="#111" stroke-width="1.100"/><path d="M18.100 10.200 L27 13 L20 17.700" stroke="#f01818" stroke-width="1.100" fill="none"/><path d="M20 17.700 L5.800 27.200" stroke="#111" stroke-width="1.100"/><g transform="translate(14.7 5.2) rotate(13.2)"><path d="M0 -1.1 H7.7 V-2.5 L12.2 0 L7.7 2.5 V1.1 H0 Z" stroke="#3030f0" stroke-width=".9" fill="#fff"/></g><g transform="translate(15.3 26.6) rotate(-32.4)"><path d="M0 -1.1 H7.8 V-2.5 L12.3 0 L7.8 2.5 V1.1 H0 Z" stroke="#3030f0" stroke-width=".9" fill="#fff"/></g></g><g transform="translate(1.40 382.50)"><path d="M21.300 5.500 L12.800 18.700" stroke="#111" stroke-width="1.100"/><path d="M12.800 18.700 L7.100 26.900" stroke="#f01818" stroke-width="1.100"/><g transform="translate(22.6 13.5) rotate(119.9)"><path d="M0 -1.2 H7.1 V-2.7 L11.6 0 L7.1 2.7 V1.2 H0 Z" stroke="#3030f0" stroke-width=".9" fill="#fff"/></g><text x="23.300" y="23.300" font-family="Liberation Sans, sans-serif" font-size="7.500" fill="#111">x</text></g><g transform="translate(36.80 382.50)"><path d="M17.200 8.300 H5.200 V17 A8.300 8.300 0 0 0 13.500 25.300 H17.200 M17.200 13 H10.500 V18.700 H17.200" stroke="#111" stroke-width="1.200" fill="none"/><path d="M17.200 8.300 H26.600 V13 H17.200 M17.200 18.700 H26.600 V25.300 H17.200" stroke="#f03030" stroke-width="1.200" fill="none"/><path d="M26.600 13 V18.700" stroke="#f03030" stroke-width="1.200"/><path d="M12.4 20.5 H20.5 V19.0 L24.7 21.6 L20.5 24.2 V22.7 H12.4 Z" stroke="#4040f0" stroke-width=".9" fill="#fff"/></g><g transform="translate(1.40 417.50)"><path d="M3.300 15.900 L27 2.700 M8 31 L32 17.500 M19.400 3.600 L29.900 26.300 M7 17 L18 32" stroke="#f8c0c0" stroke-width=".8" fill="none"/><path d="M10 13.100 A8.500 8.500 0 0 1 18.500 21.600" stroke="#999" stroke-width="1" fill="none"/><circle cx="13" cy="24" r="4.500" fill="none" stroke="#fad0d0" stroke-width=".8"/><rect x="10" y="10.800" width="13.200" height="10.800" stroke="#4848f0" stroke-width="1" fill="none"/></g><g transform="translate(1.40 460.50)"><path d="M6.200 7.800 H15.300 M25.100 18.200 V25.800" stroke="#111" stroke-width="1.100"/><path d="M15.300 7.800 L25.100 18.200" stroke="#f01818" stroke-width="1.100"/></g><g transform="translate(36.80 460.50)"><path d="M6.400 7.800 H14.700 M24.800 17.600 V25.800" stroke="#111" stroke-width="1.100"/><path d="M14.700 7.800 A10 10 0 0 1 24.800 17.600" stroke="#f01818" stroke-width="1.100" fill="none"/><rect x="14.200" y="17.100" width="1.200" height="1.200" fill="#2020f0"/></g><g transform="translate(1.40 503.50)"><path d="M3.900 25 L19.100 4" stroke="#111" stroke-width="1.100"/><g fill="none" stroke="#d01818" stroke-width="1.800"><ellipse cx="26.100" cy="15.900" rx="3.400" ry="2.400" transform="rotate(-8 26.100 15.900)"/><ellipse cx="19.800" cy="25" rx="2.500" ry="3.800" transform="rotate(-8 19.800 25)"/></g><path d="M6.200 15.800 L18 13.800 L22.500 15.500 L19 17 L7 18.800Z" fill="#f4f4f4" stroke="#555" stroke-width=".7"/><path d="M13.200 6.200 L16 7 L19.500 17 L20 21.500 L17.500 18 Z" fill="#f4f4f4" stroke="#555" stroke-width=".7"/><circle cx="12.200" cy="12.100" r="1.800" fill="#f00000"/></g><g transform="translate(36.80 503.50)"><path d="M3.900 25 L19.100 4" stroke="#777" stroke-width="1"/><g fill="none" stroke="#eda0a0" stroke-width="1.800"><ellipse cx="26.100" cy="15.900" rx="3.400" ry="2.400" transform="rotate(-8 26.100 15.900)"/><ellipse cx="19.800" cy="25" rx="2.500" ry="3.800" transform="rotate(-8 19.800 25)"/></g><path d="M6.200 15.800 L18 13.800 L22.500 15.500 L19 17 L7 18.800Z" fill="#f4f4f4" stroke="#aaa" stroke-width=".7"/><path d="M13.200 6.200 L16 7 L19.500 17 L20 21.500 L17.500 18 Z" fill="#f4f4f4" stroke="#aaa" stroke-width=".7"/><circle cx="13.400" cy="10.200" r="1.700" fill="#f08080"/><circle cx="7.700" cy="18.700" r="1.700" fill="#f08080"/></g><g transform="translate(1.40 538.50)"><path d="M10.900 5.900 V26 M22.300 5.900 V26" stroke="#111" stroke-width="1.100"/><path d="M10.900 15.700 H22.300" stroke="#aaa" stroke-width=".8"/><path d="M3.900 15.700 H10.900 M22.300 15.700 H28.900" stroke="#111" stroke-width="1.300"/><circle cx="10.900" cy="15.700" r="1.800" fill="#f00000"/><circle cx="22.300" cy="15.700" r="1.800" fill="#f00000"/></g><g transform="translate(36.80 538.50)"><path d="M7.700 5.900 V26 M18.700 5.900 V26" stroke="#111" stroke-width="1.100"/><path d="M7.700 13.100 H18.700 M7.700 19.700 H18.700" stroke="#aaa" stroke-width=".8" stroke-dasharray="1.500 1"/><path d="M18.700 13.100 H26.300 M18.700 19.700 H26.300" stroke="#111" stroke-width="1.600"/><circle cx="18.700" cy="13.100" r="1.800" fill="#f00000"/><circle cx="18.700" cy="19.700" r="1.800" fill="#f00000"/></g><g transform="translate(1.40 573.50)"><path d="M10.900 5.600 V26.400 M22.300 5.600 V26.400" stroke="#111" stroke-width="1.100"/><path d="M10.900 16 H22.300" stroke="#111" stroke-width="1.600"/><path d="M4.800 14.600 L7.600 17.400 M7.600 14.600 L4.800 17.400 M25.600 14.600 L28.400 17.400 M28.400 14.600 L25.600 17.400" stroke="#5050f0" stroke-width=".7"/><circle cx="10.900" cy="16" r="1.800" fill="#f00000"/><circle cx="22.300" cy="16" r="1.800" fill="#f00000"/></g><g transform="translate(36.80 573.50)"><path d="M5.200 27.300 L13.700 19 M18.200 14.600 L27.600 5.600" stroke="#111" stroke-width="1.200"/><circle cx="15.900" cy="16.700" r="2" fill="#f00000"/></g><g transform="translate(1.40 616.50)"><rect x="5.400" y="9.700" width="22.900" height="14.200" fill="#fff" stroke="#111" stroke-width="1"/><text x="7.200" y="22.300" font-family="Liberation Serif, serif" font-size="14.500" fill="#111">A</text><path d="M19.400 11.800 V22.300" stroke="#111" stroke-width="1.100"/></g><g transform="translate(36.80 616.50)"><rect x="3.700" y="9.700" width="25.300" height="15.300" fill="#f6f6f6" stroke="#111" stroke-width="1"/><path d="M16.600 9.700 V25" stroke="#111" stroke-width="1"/><circle cx="10" cy="17.300" r="2.600" fill="none" stroke="#111" stroke-width="1"/><path d="M5.800 17.300 H14.200 M10 13.200 V21.400" stroke="#111" stroke-width="1"/><text x="18.300" y="22.500" font-family="Liberation Sans, sans-serif" font-size="10.500" fill="#111">.1</text><g transform="translate(13.9 16.0) rotate(-47.9)"><path d="M0 0 L3.500 -1.500 V1.500Z" fill="#e8c8a0" stroke="#7a4a10" stroke-width=".4"/><path d="M0 0 L1.200 -.5 V.5Z" fill="#222"/><rect x="3.500" y="-1.500" width="10.8" height="3" fill="#e2a03c" stroke="#a86810" stroke-width=".5"/><path d="M3.500 0 H14.3" stroke="#c07c1c" stroke-width=".6"/><rect x="14.3" y="-1.500" width="2.400" height="3" fill="#e02020" stroke="#901010" stroke-width=".4"/></g></g><g transform="translate(1.40 651.50)"><defs><clipPath id="hc"><path d="M5.400 19.300 L13.200 12.600 H26.800 V26.700 H5.400Z"/></clipPath></defs><g clip-path="url(#hc)" stroke="#333" stroke-width=".6"><path d="M-18.0 28 L0.0 10"/><path d="M-15.0 28 L3.0 10"/><path d="M-12.0 28 L6.0 10"/><path d="M-9.0 28 L9.0 10"/><path d="M-6.0 28 L12.0 10"/><path d="M-3.0 28 L15.0 10"/><path d="M0.0 28 L18.0 10"/><path d="M3.0 28 L21.0 10"/><path d="M6.0 28 L24.0 10"/><path d="M9.0 28 L27.0 10"/><path d="M12.0 28 L30.0 10"/><path d="M15.0 28 L33.0 10"/><path d="M18.0 28 L36.0 10"/><path d="M21.0 28 L39.0 10"/><path d="M24.0 28 L42.0 10"/><path d="M27.0 28 L45.0 10"/><path d="M30.0 28 L48.0 10"/><path d="M33.0 28 L51.0 10"/></g><path d="M5.400 19.300 L13.200 12.600 H26.800 V26.700 H5.400Z" fill="none" stroke="#111" stroke-width="1"/><circle cx="18.400" cy="21.100" r="2.900" fill="#fff" stroke="#111" stroke-width="1"/><g transform="translate(16.6 18.2) rotate(-50.1)"><path d="M0 0 L3.500 -1.500 V1.500Z" fill="#e8c8a0" stroke="#7a4a10" stroke-width=".4"/><path d="M0 0 L1.200 -.5 V.5Z" fill="#222"/><rect x="3.500" y="-1.500" width="10.9" height="3" fill="#e2a03c" stroke="#a86810" stroke-width=".5"/><path d="M3.500 0 H14.4" stroke="#c07c1c" stroke-width=".6"/><rect x="14.4" y="-1.500" width="2.400" height="3" fill="#e02020" stroke="#901010" stroke-width=".4"/></g></g><g transform="translate(1.40 694.50)"><path d="M20.500 8.500 C19 4.500 15 4.500 13 8 C12 10 10.500 11.500 9.500 12.500" fill="none" stroke="#999" stroke-width="1.100"/><g transform="rotate(-20 23.400 16.800)"><rect x="20.300" y="7.500" width="6.200" height="19" rx="1.800" fill="#d86060" stroke="#b84848" stroke-width=".7"/><rect x="21.300" y="8" width="1.800" height="18" fill="#e88888" opacity=".7"/></g><g stroke="#e8d020" stroke-width="1"><path d="M7.600 9 V16.600 M3.800 12.800 H11.400 M4.900 10.100 L10.300 15.500 M10.300 10.100 L4.900 15.500"/></g><circle cx="7.600" cy="12.800" r="2" fill="#f8f080"/></g><g transform="translate(1.40 737.50)"><rect x="21.100" y="7.600" width="6.300" height="6.400" fill="#b4b4b4" stroke="#8a8a8a" stroke-width=".8"/><rect x="5.400" y="18.900" width="6.300" height="6.300" fill="#b4b4b4" stroke="#8a8a8a" stroke-width=".8"/><rect x="9.900" y="12.100" width="12.300" height="9" fill="#f6f2dc" stroke="#9a9a8a" stroke-width=".8"/></g><g transform="translate(36.80 737.50)"><rect x="10.500" y="13.300" width="12.400" height="7.800" fill="#f6f2dc" stroke="#9a9a8a" stroke-width=".8"/><rect x="19.500" y="7.600" width="7.900" height="6.800" fill="#b4b4b4" stroke="#8a8a8a" stroke-width=".8"/><rect x="5.500" y="18.900" width="7.700" height="6.300" fill="#b4b4b4" stroke="#8a8a8a" stroke-width=".8"/></g><g transform="translate(1.40 780.50)"><rect x="7.200" y="5.200" width="16.600" height="6.300" rx="1.500" fill="#f4dc68" stroke="#b8a030" stroke-width=".8"/><path d="M23.800 8.500 H26.800 V13 L15.500 14.200 V17" fill="none" stroke="#888" stroke-width="1"/></g></svg>
</div>
<div id="tabbar" class="a"><span class="a" style="left:460px;width:200px;top:5px;text-align:center;font-size:12px;line-height:14px;color:#111;letter-spacing:.2px">* offset.dxf</span><svg class="a" style="left:23px;top:4px" width="16" height="16" viewBox="0 0 16 16"><circle cx="7" cy="7" r="5.600" fill="#f4f0ea" stroke="#2a3a8a" stroke-width="1.900"/><path d="M3.500 7 H10.500 M7 3.500 V10.500" stroke="#e09090" stroke-width=".7"/><path d="M7 7 L13 13" stroke="#f0a020" stroke-width="2.200" stroke-linecap="round"/><path d="M6.200 6.200 L8 7.200 L7.200 8Z" fill="#e8c8a0"/><circle cx="13.300" cy="13.300" r="1.100" fill="#e05050"/></svg></div>
<div id="hr" class="a">
<i class="a" style="left:22.5px;top:16px;width:1px;height:7px;background:#444"></i>
<span class="rl" style="left:23.0px;top:0.500px;width:6px;overflow:hidden;direction:rtl;text-align:right">8</span>
<i class="a" style="left:45.0px;top:16px;width:1px;height:7px;background:#444"></i>
<span class="rl" style="left:30.5px;width:30px;text-align:center;top:0.500px">39</span>
<i class="a" style="left:67.5px;top:16px;width:1px;height:7px;background:#444"></i>
<span class="rl" style="left:53.0px;width:30px;text-align:center;top:0.500px">40</span>
<i class="a" style="left:90.0px;top:16px;width:1px;height:7px;background:#444"></i>
<span class="rl" style="left:75.5px;width:30px;text-align:center;top:0.500px">41</span>
<i class="a" style="left:112.5px;top:16px;width:1px;height:7px;background:#444"></i>
<span class="rl" style="left:98.0px;width:30px;text-align:center;top:0.500px">42</span>
<i class="a" style="left:135.0px;top:16px;width:1px;height:7px;background:#444"></i>
<span class="rl" style="left:120.5px;width:30px;text-align:center;top:0.500px">43</span>
<i class="a" style="left:157.5px;top:16px;width:1px;height:7px;background:#444"></i>
<span class="rl" style="left:143.0px;width:30px;text-align:center;top:0.500px">44</span>
<i class="a" style="left:180.0px;top:16px;width:1px;height:7px;background:#444"></i>
<span class="rl" style="left:165.5px;width:30px;text-align:center;top:0.500px">45</span>
<i class="a" style="left:202.5px;top:16px;width:1px;height:7px;background:#444"></i>
<span class="rl" style="left:188.0px;width:30px;text-align:center;top:0.500px">46</span>
<i class="a" style="left:225.0px;top:16px;width:1px;height:7px;background:#444"></i>
<span class="rl" style="left:210.5px;width:30px;text-align:center;top:0.500px">47</span>
<i class="a" style="left:247.5px;top:16px;width:1px;height:7px;background:#444"></i>
<span class="rl" style="left:233.0px;width:30px;text-align:center;top:0.500px">48</span>
<i class="a" style="left:270.0px;top:16px;width:1px;height:7px;background:#444"></i>
<span class="rl" style="left:255.5px;width:30px;text-align:center;top:0.500px">49</span>
<i class="a" style="left:292.5px;top:16px;width:1px;height:7px;background:#444"></i>
<span class="rl" style="left:278.0px;width:30px;text-align:center;top:0.500px">50</span>
<i class="a" style="left:315.0px;top:16px;width:1px;height:7px;background:#444"></i>
<span class="rl" style="left:300.5px;width:30px;text-align:center;top:0.500px">51</span>
<i class="a" style="left:337.5px;top:16px;width:1px;height:7px;background:#444"></i>
<span class="rl" style="left:323.0px;width:30px;text-align:center;top:0.500px">52</span>
<i class="a" style="left:360.0px;top:16px;width:1px;height:7px;background:#444"></i>
<span class="rl" style="left:345.5px;width:30px;text-align:center;top:0.500px">53</span>
<i class="a" style="left:382.5px;top:16px;width:1px;height:7px;background:#444"></i>
<span class="rl" style="left:368.0px;width:30px;text-align:center;top:0.500px">54</span>
<i class="a" style="left:405.0px;top:16px;width:1px;height:7px;background:#444"></i>
<span class="rl" style="left:390.5px;width:30px;text-align:center;top:0.500px">55</span>
<i class="a" style="left:427.5px;top:16px;width:1px;height:7px;background:#444"></i>
<span class="rl" style="left:413.0px;width:30px;text-align:center;top:0.500px">56</span>
<i class="a" style="left:450.0px;top:16px;width:1px;height:7px;background:#444"></i>
<span class="rl" style="left:435.5px;width:30px;text-align:center;top:0.500px">57</span>
<i class="a" style="left:472.5px;top:16px;width:1px;height:7px;background:#444"></i>
<span class="rl" style="left:458.0px;width:30px;text-align:center;top:0.500px">58</span>
<i class="a" style="left:495.0px;top:16px;width:1px;height:7px;background:#444"></i>
<span class="rl" style="left:480.5px;width:30px;text-align:center;top:0.500px">59</span>
<i class="a" style="left:517.5px;top:16px;width:1px;height:7px;background:#444"></i>
<span class="rl" style="left:503.0px;width:30px;text-align:center;top:0.500px">60</span>
<i class="a" style="left:540.0px;top:16px;width:1px;height:7px;background:#444"></i>
<span class="rl" style="left:525.5px;width:30px;text-align:center;top:0.500px">61</span>
<i class="a" style="left:562.5px;top:16px;width:1px;height:7px;background:#444"></i>
<span class="rl" style="left:548.0px;width:30px;text-align:center;top:0.500px">62</span>
<i class="a" style="left:585.0px;top:16px;width:1px;height:7px;background:#444"></i>
<span class="rl" style="left:570.5px;width:30px;text-align:center;top:0.500px">63</span>
<i class="a" style="left:607.5px;top:16px;width:1px;height:7px;background:#444"></i>
<span class="rl" style="left:593.0px;width:30px;text-align:center;top:0.500px">64</span>
<i class="a" style="left:630.0px;top:16px;width:1px;height:7px;background:#444"></i>
<span class="rl" style="left:615.5px;width:30px;text-align:center;top:0.500px">65</span>
<i class="a" style="left:652.5px;top:16px;width:1px;height:7px;background:#444"></i>
<span class="rl" style="left:638.0px;width:30px;text-align:center;top:0.500px">66</span>
<i class="a" style="left:675.0px;top:16px;width:1px;height:7px;background:#444"></i>
<span class="rl" style="left:660.5px;width:30px;text-align:center;top:0.500px">67</span>
<i class="a" style="left:697.5px;top:16px;width:1px;height:7px;background:#444"></i>
<span class="rl" style="left:683.0px;width:30px;text-align:center;top:0.500px">68</span>
<i class="a" style="left:720.0px;top:16px;width:1px;height:7px;background:#444"></i>
<span class="rl" style="left:705.5px;width:30px;text-align:center;top:0.500px">69</span>
<i class="a" style="left:742.5px;top:16px;width:1px;height:7px;background:#444"></i>
<span class="rl" style="left:728.0px;width:30px;text-align:center;top:0.500px">70</span>
<i class="a" style="left:765.0px;top:16px;width:1px;height:7px;background:#444"></i>
<span class="rl" style="left:750.5px;width:30px;text-align:center;top:0.500px">71</span>
<i class="a" style="left:787.5px;top:16px;width:1px;height:7px;background:#444"></i>
<span class="rl" style="left:773.0px;width:30px;text-align:center;top:0.500px">72</span>
<i class="a" style="left:810.0px;top:16px;width:1px;height:7px;background:#444"></i>
<span class="rl" style="left:795.5px;width:30px;text-align:center;top:0.500px">73</span>
<i class="a" style="left:832.5px;top:16px;width:1px;height:7px;background:#444"></i>
<span class="rl" style="left:818.0px;width:30px;text-align:center;top:0.500px">74</span>
<i class="a" style="left:855.0px;top:16px;width:1px;height:7px;background:#444"></i>
<span class="rl" style="left:840.5px;width:30px;text-align:center;top:0.500px">75</span>
<i class="a" style="left:877.5px;top:16px;width:1px;height:7px;background:#444"></i>
<span class="rl" style="left:863.0px;width:30px;text-align:center;top:0.500px">76</span>
<i class="a" style="left:900.0px;top:16px;width:1px;height:7px;background:#444"></i>
<span class="rl" style="left:885.5px;width:30px;text-align:center;top:0.500px">77</span>
<i class="a" style="left:922.5px;top:16px;width:1px;height:7px;background:#444"></i>
<span class="rl" style="left:908.0px;width:30px;text-align:center;top:0.500px">78</span>
<i class="a" style="left:945.0px;top:16px;width:1px;height:7px;background:#444"></i>
<span class="rl" style="left:930.5px;width:30px;text-align:center;top:0.500px">79</span>
<i class="a" style="left:967.5px;top:16px;width:1px;height:7px;background:#444"></i>
<span class="rl" style="left:953.0px;width:30px;text-align:center;top:0.500px">80</span>
<i class="a" style="left:990.0px;top:16px;width:1px;height:7px;background:#444"></i>
<span class="rl" style="left:975.5px;width:30px;text-align:center;top:0.500px">81</span>
<i class="a" style="left:1012.5px;top:16px;width:1px;height:7px;background:#444"></i>
<span class="rl" style="left:998.0px;width:30px;text-align:center;top:0.500px">82</span>
<i class="a" style="left:1035.0px;top:16px;width:1px;height:7px;background:#444"></i>
<span class="rl" style="left:1020.5px;width:30px;text-align:center;top:0.500px">83</span>
<i class="a" style="left:1057.5px;top:16px;width:1px;height:7px;background:#444"></i>
<span class="rl" style="left:1043.0px;width:30px;text-align:center;top:0.500px">84</span>
<svg class="a" style="left:287px;top:12px" width="12" height="8"><path d="M0.5 1 L11.5 1 L6 7.5Z" fill="#000"/></svg>
</div>
<div id="vr" class="a">
<i class="a" style="top:576.5px;left:16px;width:7px;height:1px;background:#444"></i>
<span class="rl" style="left:-8px;width:30px;text-align:center;top:569.0px;transform:rotate(-90deg)">8</span>
<i class="a" style="top:554.0px;left:16px;width:7px;height:1px;background:#444"></i>
<span class="rl" style="left:-8px;width:30px;text-align:center;top:549.8px;transform:rotate(-90deg)">-7</span>
<i class="a" style="top:531.5px;left:16px;width:7px;height:1px;background:#444"></i>
<span class="rl" style="left:-8px;width:30px;text-align:center;top:527.3px;transform:rotate(-90deg)">-6</span>
<i class="a" style="top:509.0px;left:16px;width:7px;height:1px;background:#444"></i>
<span class="rl" style="left:-8px;width:30px;text-align:center;top:504.8px;transform:rotate(-90deg)">-5</span>
<i class="a" style="top:486.5px;left:16px;width:7px;height:1px;background:#444"></i>
<span class="rl" style="left:-8px;width:30px;text-align:center;top:482.3px;transform:rotate(-90deg)">-4</span>
<i class="a" style="top:464.0px;left:16px;width:7px;height:1px;background:#444"></i>
<span class="rl" style="left:-8px;width:30px;text-align:center;top:459.8px;transform:rotate(-90deg)">-3</span>
<i class="a" style="top:441.5px;left:16px;width:7px;height:1px;background:#444"></i>
<span class="rl" style="left:-8px;width:30px;text-align:center;top:437.3px;transform:rotate(-90deg)">-2</span>
<i class="a" style="top:419.0px;left:16px;width:7px;height:1px;background:#444"></i>
<span class="rl" style="left:-8px;width:30px;text-align:center;top:414.8px;transform:rotate(-90deg)">-1</span>
<i class="a" style="top:396.5px;left:16px;width:7px;height:1px;background:#444"></i>
<span class="rl" style="left:-8px;width:30px;text-align:center;top:392.3px;transform:rotate(-90deg)">0</span>
<i class="a" style="top:374.0px;left:16px;width:7px;height:1px;background:#444"></i>
<span class="rl" style="left:-8px;width:30px;text-align:center;top:369.8px;transform:rotate(-90deg)">1</span>
<i class="a" style="top:351.5px;left:16px;width:7px;height:1px;background:#444"></i>
<span class="rl" style="left:-8px;width:30px;text-align:center;top:347.3px;transform:rotate(-90deg)">2</span>
<i class="a" style="top:329.0px;left:16px;width:7px;height:1px;background:#444"></i>
<span class="rl" style="left:-8px;width:30px;text-align:center;top:324.8px;transform:rotate(-90deg)">3</span>
<i class="a" style="top:306.5px;left:16px;width:7px;height:1px;background:#444"></i>
<span class="rl" style="left:-8px;width:30px;text-align:center;top:302.3px;transform:rotate(-90deg)">4</span>
<i class="a" style="top:284.0px;left:16px;width:7px;height:1px;background:#444"></i>
<span class="rl" style="left:-8px;width:30px;text-align:center;top:279.8px;transform:rotate(-90deg)">5</span>
<i class="a" style="top:261.5px;left:16px;width:7px;height:1px;background:#444"></i>
<span class="rl" style="left:-8px;width:30px;text-align:center;top:257.3px;transform:rotate(-90deg)">6</span>
<i class="a" style="top:239.0px;left:16px;width:7px;height:1px;background:#444"></i>
<span class="rl" style="left:-8px;width:30px;text-align:center;top:234.8px;transform:rotate(-90deg)">7</span>
<i class="a" style="top:216.5px;left:16px;width:7px;height:1px;background:#444"></i>
<span class="rl" style="left:-8px;width:30px;text-align:center;top:212.3px;transform:rotate(-90deg)">8</span>
<i class="a" style="top:194.0px;left:16px;width:7px;height:1px;background:#444"></i>
<span class="rl" style="left:-8px;width:30px;text-align:center;top:189.8px;transform:rotate(-90deg)">9</span>
<i class="a" style="top:171.5px;left:16px;width:7px;height:1px;background:#444"></i>
<span class="rl" style="left:-8px;width:30px;text-align:center;top:167.3px;transform:rotate(-90deg)">10</span>
<i class="a" style="top:149.0px;left:16px;width:7px;height:1px;background:#444"></i>
<span class="rl" style="left:-8px;width:30px;text-align:center;top:144.8px;transform:rotate(-90deg)">11</span>
<i class="a" style="top:126.5px;left:16px;width:7px;height:1px;background:#444"></i>
<span class="rl" style="left:-8px;width:30px;text-align:center;top:122.3px;transform:rotate(-90deg)">12</span>
<i class="a" style="top:104.0px;left:16px;width:7px;height:1px;background:#444"></i>
<span class="rl" style="left:-8px;width:30px;text-align:center;top:99.8px;transform:rotate(-90deg)">13</span>
<i class="a" style="top:81.5px;left:16px;width:7px;height:1px;background:#444"></i>
<span class="rl" style="left:-8px;width:30px;text-align:center;top:77.3px;transform:rotate(-90deg)">14</span>
<i class="a" style="top:59.0px;left:16px;width:7px;height:1px;background:#444"></i>
<span class="rl" style="left:-8px;width:30px;text-align:center;top:54.8px;transform:rotate(-90deg)">15</span>
<i class="a" style="top:36.5px;left:16px;width:7px;height:1px;background:#444"></i>
<span class="rl" style="left:-8px;width:30px;text-align:center;top:32.3px;transform:rotate(-90deg)">16</span>
<i class="a" style="top:14.0px;left:16px;width:7px;height:1px;background:#444"></i>
<span class="rl" style="left:-8px;width:30px;text-align:center;top:9.8px;transform:rotate(-90deg)">17</span>
<svg class="a" style="left:12px;top:436px" width="8" height="12"><path d="M1 0.5 L1 11.5 L7.5 6Z" fill="#000"/></svg>
</div>
<div id="cv" class="a">
<svg class="a" style="left:0;top:0" width="1044" height="576" viewBox="0 0 1044 576"><defs><pattern id="gd" x="269.50" y="396.50" width="22.5" height="22.5" patternUnits="userSpaceOnUse"><rect x="0" y="0" width="1" height="1" fill="#343434"/></pattern><radialGradient id="cur" cx="50%" cy="50%" r="50%"><stop offset="0" stop-color="#000" stop-opacity="0"/><stop offset="0.76" stop-color="#000" stop-opacity="0"/><stop offset="0.80" stop-color="#000" stop-opacity="1"/><stop offset="0.85" stop-color="#1a222b"/><stop offset="0.91" stop-color="#3d4d5b"/><stop offset="0.955" stop-color="#50657a"/><stop offset="0.985" stop-color="#485a6c"/><stop offset="1" stop-color="#1e2730"/></radialGradient></defs><rect width="1044" height="576" fill="url(#gd)"/><rect x="44.5" y="0" width="1" height="576" fill="#1c1c1c"/><rect x="269.5" y="0" width="1" height="576" fill="#1c1c1c"/><rect x="494.5" y="0" width="1" height="576" fill="#1c1c1c"/><rect x="719.5" y="0" width="1" height="576" fill="#1c1c1c"/><rect x="944.5" y="0" width="1" height="576" fill="#1c1c1c"/><rect x="0" y="171.5" width="1044" height="1" fill="#1c1c1c"/><rect x="0" y="396.5" width="1044" height="1" fill="#1c1c1c"/><path d="M180.0 397.0 L270.0 172.0" fill="none" stroke="#fff" stroke-width="1.2"/><path d="M190.4 401.2 L280.4 176.2" fill="none" stroke="#e60000" stroke-width="1.2"/><path d="M405.0 172.0 A145.3 145.3 0 0 0 315.0 397.0" fill="none" stroke="#fff" stroke-width="1.2"/><circle cx="517.5" cy="284.5" r="112.5" fill="none" stroke="#fff" stroke-width="1.2"/><ellipse cx="720.0" cy="284.5" rx="36" ry="112.5" fill="none" stroke="#fff" stroke-width="1.2"/><path d="M810.0 397.0 C922.5 357.2 810.7 247.1 900.0 172.0" fill="none" stroke="#fff" stroke-width="1.2"/><circle cx="270.0" cy="442.0" r="39.6" fill="url(#cur)"/><circle cx="270.0" cy="442.0" r="33.2" fill="none" stroke="#8fa9c2" stroke-opacity="0.10" stroke-width=".55"/><circle cx="270.0" cy="442.0" r="34.4" fill="none" stroke="#8fa9c2" stroke-opacity="0.16" stroke-width=".55"/><circle cx="270.0" cy="442.0" r="35.6" fill="none" stroke="#8fa9c2" stroke-opacity="0.22" stroke-width=".55"/><circle cx="270.0" cy="442.0" r="36.8" fill="none" stroke="#8fa9c2" stroke-opacity="0.26" stroke-width=".55"/><circle cx="270.0" cy="442.0" r="38.0" fill="none" stroke="#8fa9c2" stroke-opacity="0.24" stroke-width=".55"/><circle cx="270.0" cy="442.0" r="39.0" fill="none" stroke="#8fa9c2" stroke-opacity="0.12" stroke-width=".55"/><path d="M254.5 442.0 h31 M270.0 426.5 v31" stroke="#b9b9b9" stroke-width="3.6" fill="none"/><circle cx="270.0" cy="442.0" r="1.3" fill="#111"/></svg>
</div>
<div id="vsb" class="a"><i class="a" style="left:4px;top:130px;width:8px;height:319px;border-radius:4px;background:#7f7f7f"></i></div>
<div id="hsb" class="a"><i class="a" style="left:148px;top:4.300px;width:685px;height:8px;border-radius:4px;background:#7f7f7f"></i><span class="a" style="left:1004px;top:1px;width:56px;height:15.300px;background:#ececec;font-size:13px;line-height:16px;text-align:right;padding-right:1.500px">1 &lt; 10</span></div>
<div id="cmdhist" class="a"><span class="a" style="left:4px;top:0.700px;font-size:13.4px;line-height:15px;font-style:italic;color:#0000c8">Kommando: <span style="font-style:normal">offset</span></span><i class="a" style="left:1069px;top:0px;width:8px;height:18px;border-radius:4px;background:#7f7f7f"></i></div>
<div id="cmdline" class="a"><span class="a" style="left:1px;top:6.500px;font-size:13.1px;line-height:16px;color:#111">Linie, Bogen, Kreis, Ellipse, Spline oder Polylinie wählen:</span><i class="a" style="left:335.500px;top:5px;width:718px;height:18.500px;background:#fff"></i><i class="a" style="left:1055.500px;top:1.500px;width:25px;height:25px;border:1px solid #b0b0b0;background:linear-gradient(#fbfbfb,#ececec)"></i><svg class="a" style="left:1061px;top:9px" width="15" height="11"><rect x="0.500" y="0.500" width="13.500" height="9.500" fill="#fff" stroke="#222" stroke-width="1"/><rect x="0" y="0" width="14.500" height="3.200" fill="#111"/></svg></div>
<div id="rp" class="a">
</div>
<i class="a" style="left:1153px;top:108px;width:2.500px;height:690px;background:#e0e0e0"></i><i class="a" style="left:1155px;top:108px;width:298px;height:23px;background:linear-gradient(#eaeaea,#e3e3e3 60%,#d8d8d8)"></i><span class="a" style="left:1155px;top:110.500px;width:335px;text-align:center;font-size:11.6px;line-height:15px;color:#111;letter-spacing:.1px">Layerliste</span><svg class="a" style="left:1155px;top:108px" width="40" height="22"><circle cx="9" cy="10" r="6.900" fill="#6c6c6c"/><path d="M6.300 7.300 L11.700 12.700 M11.700 7.300 L6.300 12.700" stroke="#f2f2f2" stroke-width="1.700"/><circle cx="27" cy="10" r="6.900" fill="#6c6c6c"/><rect x="25.600" y="7.300" width="4.600" height="3.800" fill="none" stroke="#f2f2f2" stroke-width="1"/><rect x="23.600" y="9.300" width="4.600" height="3.800" fill="#6e6e6e" stroke="#f2f2f2" stroke-width="1"/></svg><svg class="a" style="left:1155px;top:130px" width="300" height="27" viewBox="1155 130 300 27"><defs><linearGradient id="gLy" x1="0" y1="0" x2="0" y2="1"><stop offset="0" stop-color="#f6f6f6"/><stop offset=".5" stop-color="#eeeeee"/><stop offset="1" stop-color="#f0f0f0"/></linearGradient></defs><rect x="1155" y="130.300" width="300" height="26.300" fill="#a9a9a9"/><rect x="1155.90" y="131.400" width="58.300" height="23.400" fill="url(#gLy)"/><rect x="1215.92" y="131.400" width="58.300" height="23.400" fill="url(#gLy)"/><rect x="1275.94" y="131.400" width="58.300" height="23.400" fill="url(#gLy)"/><rect x="1335.96" y="131.400" width="58.300" height="23.400" fill="url(#gLy)"/><rect x="1395.98" y="131.400" width="58.300" height="23.400" fill="url(#gLy)"/></svg><svg class="a" style="left:1155px;top:131px" width="298" height="24"><g transform="translate(29.8 11.9) scale(1.00)"><path d="M-6.600 0.500 C-4.600 -5.200 4.200 -5.700 6.800 0 C4.600 4.800 -3.600 5.300 -6.600 0.500Z" fill="#fff" stroke="#000" stroke-width="1.500"/><path d="M-6.800 0 C-4.600 -5.900 4.200 -6.400 7 -0.400" fill="none" stroke="#000" stroke-width="2.700"/><circle cx="0.300" cy="0.200" r="3" fill="#fff" stroke="#000" stroke-width="1.500"/><circle cx="0.500" cy="-0.700" r="1.700" fill="#000"/></g><g transform="translate(89.8 11.9) scale(1.00)"><path d="M-6.600 0.500 C-4.600 -5.200 4.200 -5.700 6.800 0 C4.600 4.800 -3.600 5.300 -6.600 0.500Z" fill="#fff" stroke="#aaa" stroke-width="1.500"/><path d="M-6.800 0 C-4.600 -5.900 4.200 -6.400 7 -0.400" fill="none" stroke="#aaa" stroke-width="2.700"/><circle cx="0.300" cy="0.200" r="3" fill="#fff" stroke="#aaa" stroke-width="1.500"/><circle cx="0.500" cy="-0.700" r="1.700" fill="#aaa"/></g><path d="M144.500 12.200 H155.500 M150 6.700 V17.700" stroke="#e00000" stroke-width="2.600"/><path d="M144.500 12.200 H155.500 M150 6.700 V17.700" stroke="#700" stroke-width="3.400" opacity=".25"/><path d="M204 12.300 H216" stroke="#e00000" stroke-width="2.600"/><g transform="translate(262.8 18.6) rotate(-41.6)"><path d="M0 0 L3.500 -1.700 V1.500Z" fill="#e8c8a0" stroke="#7a4a10" stroke-width=".4"/><path d="M0 0 L1.200 -.5 V.5Z" fill="#222"/><rect x="3.500" y="-1.700" width="13.1" height="3.400" fill="#e2a03c" stroke="#a86810" stroke-width=".5"/><path d="M3.500 0 H16.6" stroke="#c07c1c" stroke-width=".6"/><rect x="16.6" y="-1.700" width="2.400" height="3.400" fill="#e02020" stroke="#901010" stroke-width=".4"/></g></svg><i class="a" style="left:1161px;top:163px;width:16px;height:9.500px;background:#fff;border:1px solid #111"></i><i class="a" style="left:1161px;top:183px;width:16px;height:9.500px;background:#f00000;border:1px solid #111"></i><span class="a" style="left:1183px;top:160px;font-size:13px;line-height:15px;color:#111">0</span><span class="a" style="left:1183px;top:180px;font-size:13px;line-height:15px;color:#111">Versatz</span><svg class="a" style="left:1390px;top:157px" width="63" height="42"><g transform="translate(32.9 9.7) scale(1.00)"><path d="M-6.600 0.500 C-4.600 -5.200 4.200 -5.700 6.800 0 C4.600 4.800 -3.600 5.300 -6.600 0.500Z" fill="#fff" stroke="#000" stroke-width="1.500"/><path d="M-6.800 0 C-4.600 -5.900 4.200 -6.400 7 -0.400" fill="none" stroke="#000" stroke-width="2.700"/><circle cx="0.300" cy="0.200" r="3" fill="#fff" stroke="#000" stroke-width="1.500"/><circle cx="0.500" cy="-0.700" r="1.700" fill="#000"/></g><g transform="translate(32.9 29.8) scale(1.00)"><path d="M-6.600 0.500 C-4.600 -5.200 4.200 -5.700 6.800 0 C4.600 4.800 -3.600 5.300 -6.600 0.500Z" fill="#fff" stroke="#000" stroke-width="1.500"/><path d="M-6.800 0 C-4.600 -5.900 4.200 -6.400 7 -0.400" fill="none" stroke="#000" stroke-width="2.700"/><circle cx="0.300" cy="0.200" r="3" fill="#fff" stroke="#000" stroke-width="1.500"/><circle cx="0.500" cy="-0.700" r="1.700" fill="#000"/></g><g transform="translate(55.1 10.4)"><path d="M-3.200 -0.500 V-3.300 A3.200 3.300 0 0 1 3.200 -3.300 V-0.500" fill="none" stroke="#c4c4c4" stroke-width="1.200"/><rect x="-5" y="-0.800" width="10" height="7.300" fill="#b4b4b4"/></g><g transform="translate(55.1 30.4)"><path d="M-3.200 -0.500 V-3.300 A3.200 3.300 0 0 1 3.200 -3.300 V-0.500" fill="none" stroke="#c4c4c4" stroke-width="1.200"/><rect x="-5" y="-0.800" width="10" height="7.300" fill="#b4b4b4"/></g><g transform="translate(4.4 36.3) rotate(-43.9)"><path d="M0 0 L3.500 -1.500 V1.500Z" fill="#e8c8a0" stroke="#7a4a10" stroke-width=".4"/><path d="M0 0 L1.200 -.5 V.5Z" fill="#222"/><rect x="3.500" y="-1.500" width="12.1" height="3" fill="#e2a03c" stroke="#a86810" stroke-width=".5"/><path d="M3.500 0 H15.6" stroke="#c07c1c" stroke-width=".6"/><rect x="15.6" y="-1.500" width="2.400" height="3" fill="#e02020" stroke="#901010" stroke-width=".4"/></g></svg><i class="a" style="left:1454px;top:108px;width:1px;height:690px;background:#cdcdcd"></i><i class="a" style="left:1155px;top:797px;width:299px;height:1px;background:#cfcfcf"></i>
<div id="rdock" class="a"></div>
<i class="a" style="left:1462.0px;top:115.500px;width:2px;height:2px;background:#9a9a9a"></i><i class="a" style="left:1468.2px;top:115.500px;width:2px;height:2px;background:#9a9a9a"></i><i class="a" style="left:1474.4px;top:115.500px;width:2px;height:2px;background:#9a9a9a"></i><i class="a" style="left:1480.6px;top:115.500px;width:2px;height:2px;background:#9a9a9a"></i><i class="a" style="left:1486.8px;top:115.500px;width:2px;height:2px;background:#9a9a9a"></i><i class="a" style="left:1456px;top:120.500px;width:44px;height:42.500px;border-radius:5px 0 0 5px;background:#b7b7b7"></i><i class="a" style="left:1456px;top:417px;width:44px;height:43px;border-radius:5px 0 0 5px;background:#b7b7b7"></i><i class="a" style="left:1458px;top:261px;width:42px;height:1px;background:repeating-linear-gradient(90deg,#666 0 1px,transparent 1px 3px)"></i><i class="a" style="left:1458px;top:409px;width:42px;height:1px;background:repeating-linear-gradient(90deg,#666 0 1px,transparent 1px 3px)"></i><svg class="a" style="left:1463px;top:127.0px" width="28" height="28" viewBox="0 0 28 28"><rect x="0.500" y="0.500" width="27" height="27" fill="#fff" stroke="#555" stroke-width=".8"/><rect x="0.500" y="0.500" width="27" height="4.300" fill="#000"/><rect x="1.200" y="1" width="3.200" height="3.200" fill="#fff" stroke="#333" stroke-width=".4"/><g transform="translate(14 16)"><path d="M-7 -4 L1 -7.500 V3.500 L-7 7Z" fill="#ccc" stroke="#555" stroke-width=".7"/><path d="M-5 -4 L3 -7.500 V3.500 L-5 7Z" fill="#ddd" stroke="#555" stroke-width=".7"/><path d="M-3 -4 L6 -8 V3.500 L-3 7.500Z" fill="#f4f4f4" stroke="#666" stroke-width=".7"/><path d="M-1 4.500 L4 -4.500 V2.500Z" fill="none" stroke="#e04040" stroke-width=".9"/></g></svg><svg class="a" style="left:1463px;top:174.0px" width="28" height="28" viewBox="0 0 28 28"><rect x="0.500" y="0.500" width="27" height="27" fill="#fff" stroke="#555" stroke-width=".8"/><rect x="0.500" y="0.500" width="27" height="4.300" fill="#000"/><rect x="1.200" y="1" width="3.200" height="3.200" fill="#fff" stroke="#333" stroke-width=".4"/><rect x="7" y="10" width="10" height="8.500" fill="#f4ecc0" stroke="#777" stroke-width=".8"/><circle cx="17.500" cy="18" r="4.300" fill="#f4ecc0" fill-opacity=".8" stroke="#777" stroke-width=".8"/></svg><svg class="a" style="left:1463px;top:220.5px" width="28" height="28" viewBox="0 0 28 28"><rect x="0.500" y="0.500" width="27" height="27" fill="#fff" stroke="#555" stroke-width=".8"/><rect x="0.500" y="0.500" width="27" height="4.300" fill="#000"/><rect x="1.200" y="1" width="3.200" height="3.200" fill="#fff" stroke="#333" stroke-width=".4"/><rect x="5.500" y="10.500" width="17" height="11" rx="2" fill="#f4f6fa" stroke="#b4c8e8" stroke-width="1"/></svg><svg class="a" style="left:1463px;top:276.0px" width="28" height="28" viewBox="0 0 28 28"><rect x="0.500" y="0.500" width="27" height="27" fill="#fff" stroke="#555" stroke-width=".8"/><rect x="0.500" y="0.500" width="27" height="4.300" fill="#000"/><rect x="1.200" y="1" width="3.200" height="3.200" fill="#fff" stroke="#333" stroke-width=".4"/><rect x="3.500" y="8.3" width="3.300" height="2.800" fill="#000"/><rect x="9.500" y="8.3" width="14.500" height="2.800" fill="#fff" stroke="#555" stroke-width=".6"/><rect x="3.500" y="14.3" width="3.300" height="2.800" fill="#000"/><rect x="9.500" y="14.3" width="14.500" height="2.800" fill="#fff" stroke="#555" stroke-width=".6"/><rect x="3.500" y="20.3" width="3.300" height="2.800" fill="#000"/><rect x="9.500" y="20.3" width="14.500" height="2.800" fill="#fff" stroke="#555" stroke-width=".6"/></svg><svg class="a" style="left:1463px;top:322.0px" width="28" height="28" viewBox="0 0 28 28"><rect x="0.500" y="0.500" width="27" height="27" fill="#fff" stroke="#555" stroke-width=".8"/><rect x="0.500" y="0.500" width="27" height="4.300" fill="#000"/><rect x="1.200" y="1" width="3.200" height="3.200" fill="#fff" stroke="#333" stroke-width=".4"/><path d="M6.500 9.500 H21.500 L15.700 17 V23 L13.300 21.500 V17Z" fill="#c8c8c8" stroke="#666" stroke-width=".8"/><ellipse cx="14" cy="9.700" rx="7.500" ry="1.600" fill="#999" stroke="#666" stroke-width=".6"/></svg><svg class="a" style="left:1463px;top:368.5px" width="28" height="28" viewBox="0 0 28 28"><rect x="0.500" y="0.500" width="27" height="27" fill="#fff" stroke="#555" stroke-width=".8"/><rect x="0.500" y="0.500" width="27" height="4.300" fill="#000"/><rect x="1.200" y="1" width="3.200" height="3.200" fill="#fff" stroke="#333" stroke-width=".4"/><path d="M3 15.500 H25" stroke="#f0a0a0" stroke-width=".8" stroke-dasharray="2 1"/><path d="M6.500 9.500 L11.500 12 V19 L6.500 21.500Z" fill="#f4f4f4" stroke="#444" stroke-width=".8"/><rect x="11.500" y="12" width="10.500" height="7" rx="1" fill="#9a9a9a" stroke="#555" stroke-width=".7"/><path d="M14 12 V19 M16 12 V19 M18 12 V19 M20 12 V19" stroke="#666" stroke-width=".6"/><path d="M3 15.500 H25" stroke="#f08080" stroke-width=".6" stroke-dasharray="2 1" opacity=".8"/></svg><svg class="a" style="left:1463px;top:424.0px" width="28" height="28" viewBox="0 0 28 28"><rect x="0.500" y="0.500" width="27" height="27" fill="#fff" stroke="#555" stroke-width=".8"/><rect x="0.500" y="0.500" width="27" height="4.300" fill="#000"/><rect x="1.200" y="1" width="3.200" height="3.200" fill="#fff" stroke="#333" stroke-width=".4"/><g font-family="Liberation Sans, sans-serif" font-size="2.600" fill="#444"><text x="2.500" y="9.500">Command: line</text><text x="2.500" y="13">Command: line</text><text x="2.500" y="16.500">Command: line</text><text x="2.500" y="20">Command: line</text><text x="3" y="26.300" font-size="3">C</text><text x="10" y="26.300" font-size="3">command</text></g><path d="M0.500 22.800 H27.500" stroke="#444" stroke-width=".6"/></svg><svg class="a" style="left:1463px;top:471.500px" width="28" height="28" viewBox="0 0 28 28"><rect x="0.500" y="0.500" width="27" height="27" fill="#fff" stroke="#555" stroke-width=".8"/><rect x="0.500" y="0.500" width="27" height="4.300" fill="#000"/><rect x="1.200" y="1" width="3.200" height="3.200" fill="#fff" stroke="#333" stroke-width=".4"/><g transform="translate(6.500 7.500) scale(0.500)"><rect x="3.500" y="4.500" width="25" height="26" rx="1.5" fill="#c88a2c" stroke="#a06a18" stroke-width="1.2"/><path d="M6.500 7.500 h19 v20.500 h-19z" fill="#f7f7f7" stroke="#b9b9b9" stroke-width=".7"/><path d="M20.500 28 L25.500 23 v5z" fill="#9a9a9a"/><path d="M20.500 28 v-5 h5" fill="#e2e2e2" stroke="#aaa" stroke-width=".6"/><path d="M10 12 h12 M10 15 h12 M10 18 h12 M10 21 h9 M10 24 h7" stroke="#cfcfcf" stroke-width="1.1"/><path d="M10.500 8.500 v-3 a1 1 0 0 1 1 -1 h2 v-2 h5 v2 h2 a1 1 0 0 1 1 1 v3z" fill="#9c9c92" stroke="#77776e" stroke-width=".8"/></g></svg>
<div id="status" class="a">
<span class="st" style="left:2.500px;top:8px">50,-2</span><span class="st" style="left:2.500px;top:28.500px">@50,-2</span>
<i class="a" style="left:253px;top:4px;width:1px;height:40px;background:#8a8a8a"></i>
<span class="st" style="left:256.500px;top:8px">50.04&lt;358°</span><span class="st" style="left:256.500px;top:28.500px">@50.04&lt;358°</span>
<span class="st" style="left:480px;width:219px;text-align:right;top:13px;line-height:11.2px;white-space:normal;font-size:10px;letter-spacing:0">Linie, Bogen, Kreis, Ellipse, Spline oder<br>Polylinie wählen</span>
<span class="st" style="left:754.300px;top:18px">Abbrechen</span>
<span class="st" style="left:949px;top:18px">Keine Objekte selektiert.</span>
<i class="a" style="left:506px;top:21px;width:6px;height:6px;border-radius:3px;background:#cdcdcd"></i>
<i class="a" style="left:940px;top:21px;width:6px;height:6px;border-radius:3px;background:#cdcdcd"></i>
<i class="a" style="left:1269px;top:21px;width:6px;height:6px;border-radius:3px;background:#cdcdcd"></i>
<svg class="a" style="left:716px;top:7px" width="20" height="32"><rect x="1.300" y="0.800" width="17.600" height="30" rx="8.800" fill="#fff" stroke="#333" stroke-width=".9"/><path d="M1.500 12.500 Q10 10.500 18.700 12.500 M10.100 1 V11.400" stroke="#333" stroke-width=".8" fill="none"/><ellipse cx="10.100" cy="5.800" rx="1.400" ry="3" fill="#fff" stroke="#333" stroke-width=".8"/></svg>
</div>
</body></html>
